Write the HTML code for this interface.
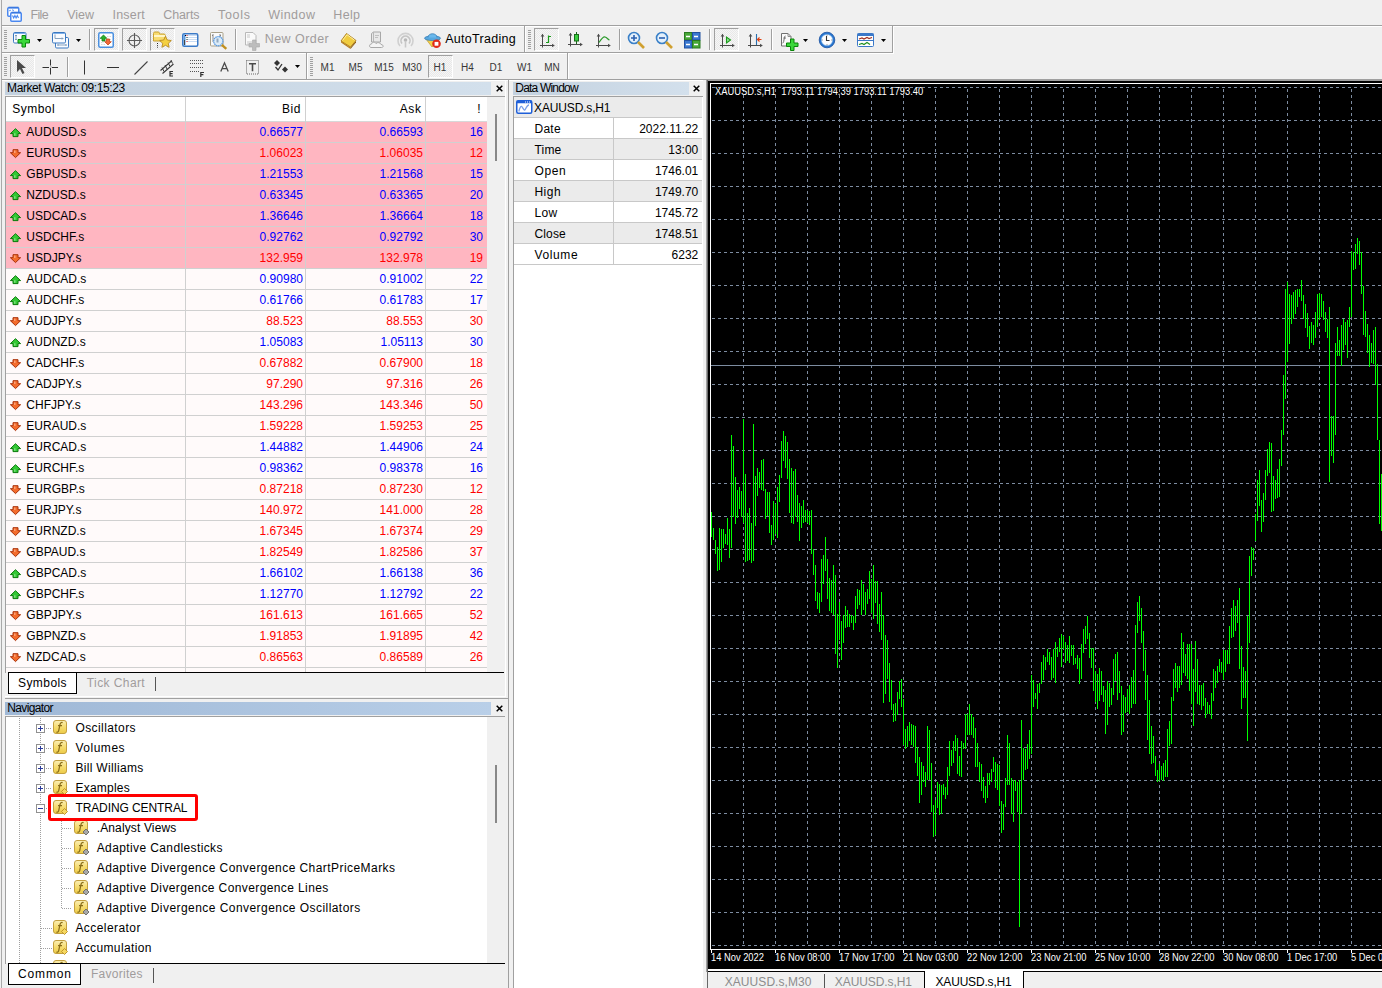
<!DOCTYPE html><html><head><meta charset="utf-8"><title>MetaTrader 4</title><style>
*{margin:0;padding:0;box-sizing:border-box}
html,body{width:1382px;height:988px;overflow:hidden;background:#f0f0f0;font-family:"Liberation Sans",sans-serif;font-size:12px;color:#000}
.ab{position:absolute}
.t{position:absolute;white-space:nowrap;line-height:14px;height:14px}
.r{text-align:right}
svg{position:absolute;overflow:visible}
</style></head><body>
<div class="ab" style="left:1px;top:0px;width:1px;height:988px;background:#a9a9a9"></div>
<div class="ab" style="left:2px;top:25px;width:1380px;height:1px;background:#a0a0a0"></div>
<div class="ab" style="left:2px;top:26px;width:1380px;height:1px;background:#fff"></div>
<div class="ab" style="left:2px;top:52px;width:891px;height:1px;background:#a0a0a0"></div>
<div class="ab" style="left:2px;top:53px;width:892px;height:1px;background:#fff"></div>
<div class="ab" style="left:892px;top:26px;width:1px;height:27px;background:#a0a0a0"></div>
<div class="ab" style="left:893px;top:26px;width:1px;height:27px;background:#fff"></div>
<div class="ab" style="left:2px;top:79px;width:1380px;height:1px;background:#a0a0a0"></div>
<div class="ab" style="left:2px;top:80px;width:1380px;height:1px;background:#fff"></div>
<div class="ab" style="left:567px;top:53px;width:1px;height:26px;background:#a0a0a0"></div>
<div class="ab" style="left:568px;top:53px;width:1px;height:26px;background:#fff"></div>
<div class="ab" style="left:524px;top:26px;width:1px;height:26px;background:#a0a0a0"></div>
<div class="ab" style="left:525px;top:26px;width:1px;height:26px;background:#fff"></div>
<div class="ab" style="left:306px;top:53px;width:1px;height:26px;background:#a0a0a0"></div>
<div class="ab" style="left:307px;top:53px;width:1px;height:26px;background:#fff"></div>
<svg style="left:6px;top:6px" width="17" height="17" viewBox="0 0 17 17"><rect x="1.75" y="1.75" width="11" height="8.5" rx="1" fill="#fff" stroke="#4a88f0" stroke-width="1.5"/><path d="M2.5 1.5h10" stroke="#3a78e0" stroke-width="1.6"/><path d="M3.5 5l1-1M6.5 3.5l1 1.5" stroke="#4a88f0" stroke-width="1.1"/><rect x="4.75" y="6.75" width="10.5" height="8.5" rx="1" fill="#fff" stroke="#4a88f0" stroke-width="1.5"/><path d="M5.5 6.5h9.5" stroke="#3a78e0" stroke-width="1.6"/><path d="M6.5 9.5l1.2 2.5 1.2-2.5 1.2 2.5 1.2-2.5 1.2 2.5" stroke="#4a88f0" stroke-width="1.1" fill="none"/></svg>
<div class="t" style="left:30.50px;top:7.67px;font-size:12.5px;letter-spacing:-0.646px;color:#a09c9c">File</div>
<div class="t" style="left:67.30px;top:7.67px;font-size:12.5px;letter-spacing:-0.067px;color:#a09c9c">View</div>
<div class="t" style="left:112.50px;top:7.67px;font-size:12.5px;letter-spacing:0.208px;color:#a09c9c">Insert</div>
<div class="t" style="left:163.30px;top:7.67px;font-size:12.5px;letter-spacing:-0.123px;color:#a09c9c">Charts</div>
<div class="t" style="left:218.00px;top:7.67px;font-size:12.5px;letter-spacing:0.706px;color:#a09c9c">Tools</div>
<div class="t" style="left:268.20px;top:7.67px;font-size:12.5px;letter-spacing:0.463px;color:#a09c9c">Window</div>
<div class="t" style="left:333.30px;top:7.67px;font-size:12.5px;letter-spacing:0.329px;color:#a09c9c">Help</div>
<div class="ab" style="left:4px;top:30px;width:3px;height:1px;background:#a0a0a0"></div>
<div class="ab" style="left:4px;top:32px;width:3px;height:1px;background:#a0a0a0"></div>
<div class="ab" style="left:4px;top:34px;width:3px;height:1px;background:#a0a0a0"></div>
<div class="ab" style="left:4px;top:36px;width:3px;height:1px;background:#a0a0a0"></div>
<div class="ab" style="left:4px;top:38px;width:3px;height:1px;background:#a0a0a0"></div>
<div class="ab" style="left:4px;top:40px;width:3px;height:1px;background:#a0a0a0"></div>
<div class="ab" style="left:4px;top:42px;width:3px;height:1px;background:#a0a0a0"></div>
<div class="ab" style="left:4px;top:44px;width:3px;height:1px;background:#a0a0a0"></div>
<div class="ab" style="left:4px;top:46px;width:3px;height:1px;background:#a0a0a0"></div>
<div class="ab" style="left:4px;top:48px;width:3px;height:1px;background:#a0a0a0"></div>
<svg style="left:13px;top:32px" width="18" height="16" viewBox="0 0 18 16"><rect x="0.5" y="0.5" width="12.5" height="10.5" rx="1.2" fill="#fafcff" stroke="#3a78c0"/><path d="M1 1.5h11.5" stroke="#7fb0e8"/><path d="M3 3v5M2 4l1-1 1 1M2 7l1 1 1-1" stroke="#7a98b8" stroke-width="0.9"/><path d="M9 3.5h3.5v4h4v3.5h-4v4h-3.5v-4h-4v-3.5h4z" fill="#3ad83a" stroke="#0a840a" stroke-width="1"/></svg>
<svg style="left:37px;top:39px" width="6" height="4" viewBox="0 0 6 4"><path d="M0 0H5L2.5 3Z" fill="#000"/></svg>
<svg style="left:52px;top:32px" width="18" height="17" viewBox="0 0 18 17"><rect x="3.5" y="5.5" width="13" height="10.5" rx="1.2" fill="#fafcff" stroke="#3a78c0"/><rect x="0.5" y="0.5" width="13" height="10.5" rx="1.2" fill="#fafcff" stroke="#3a78c0"/><path d="M1 1.5h12" stroke="#7fb0e8"/><path d="M3 2.5v4h8M10 5.5l1 1-1 1M5.5 13h9M6.5 12l-1 1 1 1M13.5 12l1 1-1 1" stroke="#7a98b8" stroke-width="0.9" fill="none"/></svg>
<svg style="left:76px;top:39px" width="6" height="4" viewBox="0 0 6 4"><path d="M0 0H5L2.5 3Z" fill="#000"/></svg>
<div class="ab" style="left:89px;top:29px;width:1px;height:21px;background:#a0a0a0"></div>
<div class="ab" style="left:90px;top:29px;width:1px;height:21px;background:#fff"></div>
<div class="ab" style="left:94px;top:28px;width:25px;height:23px;background:repeating-conic-gradient(#f6f6f6 0 25%,#e8e8e8 0 50%) 0 0/2px 2px;border-top:1px solid #a0a0a0;border-left:1px solid #a0a0a0;border-right:1px solid #fff;border-bottom:1px solid #fff"></div>
<svg style="left:98px;top:32px" width="16" height="16" viewBox="0 0 16 16"><rect x="0.75" y="0.75" width="14.5" height="14.5" rx="1.5" fill="#fff" stroke="#4a90e0" stroke-width="1.5"/><path d="M9 4.5h4M9 7.5h4M3 10.5h3M3 12.5h5" stroke="#d8d8d8" stroke-dasharray="1.5 1"/><path d="M5.5 3L8.8 6.3H7V9H4V6.3H2.2z" fill="#2cb02c" stroke="#128012" stroke-width="0.8"/><path d="M10 13L13.3 9.7H11.5V7H8.5V9.7H6.7z" fill="#f06a3a" stroke="#c84818" stroke-width="0.8"/></svg>
<div class="ab" style="left:122px;top:28px;width:25px;height:23px;background:repeating-conic-gradient(#f6f6f6 0 25%,#e8e8e8 0 50%) 0 0/2px 2px;border-top:1px solid #a0a0a0;border-left:1px solid #a0a0a0;border-right:1px solid #fff;border-bottom:1px solid #fff"></div>
<svg style="left:127px;top:32px" width="16" height="16" viewBox="0 0 16 16"><circle cx="7.5" cy="8.5" r="5.5" fill="none" stroke="#5a5a5a" stroke-width="1.1"/><path d="M7.5 1v15M0 8.5h15" stroke="#5a5a5a" stroke-width="1.1"/></svg>
<div class="ab" style="left:150px;top:28px;width:25px;height:23px;background:repeating-conic-gradient(#f6f6f6 0 25%,#e8e8e8 0 50%) 0 0/2px 2px;border-top:1px solid #a0a0a0;border-left:1px solid #a0a0a0;border-right:1px solid #fff;border-bottom:1px solid #fff"></div>
<svg style="left:152px;top:31px" width="20" height="18" viewBox="0 0 20 18"><path d="M1.5 2.5c0-1 .5-1.5 1.5-1.5h3c1 0 1.5.5 1.5 1.5v.5h4.5c.8 0 1.2.4 1.2 1.2v5.8h-11.7z" fill="#f8dc70" stroke="#c8a030"/><path d="M2 5h11" stroke="#fff6c8" stroke-width="2"/><path d="M13.5 5.2l1.8 3.8 4 .5-3 2.8.8 4-3.6-2-3.6 2 .8-4-3-2.8 4-.5z" fill="#f4d040" stroke="#b88a20" stroke-width="0.9"/><path d="M5.5 12v5" stroke="#222" stroke-dasharray="1 1.2"/></svg>
<svg style="left:182px;top:33px" width="17" height="14" viewBox="0 0 17 14"><rect x="0.75" y="0.75" width="15" height="12.5" rx="1.5" fill="#fff" stroke="#3a7ac8" stroke-width="1.5"/><rect x="1.5" y="1.5" width="2" height="11" fill="#5a9ae0"/><path d="M2.5 7v5" stroke="#444"/><path d="M5 2.5h10M5 4.5h10M5 6.5h10M5 8.5h10" stroke="#c8dcf4"/><path d="M3 2.5h1" stroke="#000"/><path d="M4.5 2.5h1M4.5 8.5h1" stroke="#e02020"/><path d="M4.5 4.5h1M4.5 6.5h1" stroke="#203a20"/></svg>
<svg style="left:210px;top:32px" width="19" height="18" viewBox="0 0 19 18"><rect x="0.5" y="0.5" width="12.5" height="13.5" rx="1" fill="#fafafa" stroke="#a8a088"/><path d="M3 2v8M10 2v4M3 3l-1 1M10 3l1 1" stroke="#707070" stroke-width="0.8"/><circle cx="8.3" cy="9.2" r="4.6" fill="#dcecf8" stroke="#5a9ae0" stroke-width="1.2" stroke-dasharray="1.5 0.5"/><path d="M7.5 6.5v4" stroke="#90a8c0" stroke-width="2"/><path d="M11.8 12.8l4.5 4" stroke="#c09020" stroke-width="2.4"/></svg>
<div class="ab" style="left:235px;top:29px;width:1px;height:21px;background:#a0a0a0"></div>
<div class="ab" style="left:236px;top:29px;width:1px;height:21px;background:#fff"></div>
<svg style="left:245px;top:31px" width="17" height="19" viewBox="0 0 17 19"><path d="M0.5 1.5h7.5l3 3v9.5h-10.5z" fill="#fafafa" stroke="#b8b8b8"/><path d="M2 4h3M2 6h3M2 11h5M2 13h4" stroke="#c8c8c8" stroke-width="1.2"/><path d="M7.5 9h3.5v3.5h3.5v3.5h-3.5v3.5h-3.5v-3.5h-3.5v-3.5h3.5z" fill="#bdbdbd" stroke="#a8a8a8" stroke-width="0.6"/></svg>
<div class="t" style="left:264.70px;top:31.67px;font-size:12.5px;letter-spacing:0.458px;color:#a09c9c">New&nbsp;Order</div>
<svg style="left:340px;top:32px" width="18" height="16" viewBox="0 0 18 16"><path d="M1 9l5.5-7.5 9.5 7-5.5 6.5z" fill="#f0cc40" stroke="#a87818" stroke-width="0.9"/><path d="M2.5 8.5l4.5-5.8 7.5 5.5" stroke="#fff0a0" fill="none"/><path d="M1 9l9.5 6.5v1.5L1 10.5z" fill="#b88020"/><path d="M10.5 15.5l5.5-6.5v1.5l-5.5 6.5z" fill="#906010"/></svg>
<svg style="left:369px;top:31px" width="17" height="18" viewBox="0 0 17 18"><path d="M2.5 2.5l2-1.5h7v10h-9z" fill="#e8e8e8" stroke="#a8a8a8"/><path d="M4.5 1v10" stroke="#b8b8b8"/><path d="M6 4.5h4M6 6.5h3" stroke="#c0c0c0"/><path d="M2 16.5c-2 0-2-3.5.5-3.5c.5-2 3.5-2.5 4.5-.5c1.5-1.5 4.5-1 5 1c2.5 0 3 3 .5 3z" fill="#f4f4f4" stroke="#a8a8a8"/></svg>
<svg style="left:397px;top:32px" width="17" height="17" viewBox="0 0 17 17"><path d="M3 14A7.5 7.5 0 1 1 14 14" fill="none" stroke="#d0d0d0" stroke-width="1.6"/><path d="M5 11.5A4.5 4.5 0 1 1 12 11.5" fill="none" stroke="#c4c4c4" stroke-width="1.6"/><circle cx="8.5" cy="8" r="1.8" fill="#b8b8b8"/><path d="M8.5 9v6.5" stroke="#c8c8c8" stroke-width="1.6"/></svg>
<svg style="left:424px;top:31px" width="18" height="18" viewBox="0 0 18 18"><path d="M2 8l6 8 8-8z" fill="#f4d048" stroke="#c8a030" stroke-width="0.8"/><ellipse cx="8.5" cy="7.2" rx="8" ry="2.3" fill="#58a8e0" stroke="#3a80b8" stroke-width="0.8"/><path d="M4 6.5c0-5 9-5 9 0" fill="#6ab8ec" stroke="#3a80b8" stroke-width="0.8"/><circle cx="12.5" cy="12.8" r="4.3" fill="#e02a1a"/><rect x="10.6" y="10.9" width="3.8" height="3.8" fill="#fff"/></svg>
<div class="t" style="left:445.20px;top:31.67px;font-size:12.5px;letter-spacing:0.296px;">AutoTrading</div>
<div class="ab" style="left:528px;top:30px;width:3px;height:1px;background:#a0a0a0"></div>
<div class="ab" style="left:528px;top:32px;width:3px;height:1px;background:#a0a0a0"></div>
<div class="ab" style="left:528px;top:34px;width:3px;height:1px;background:#a0a0a0"></div>
<div class="ab" style="left:528px;top:36px;width:3px;height:1px;background:#a0a0a0"></div>
<div class="ab" style="left:528px;top:38px;width:3px;height:1px;background:#a0a0a0"></div>
<div class="ab" style="left:528px;top:40px;width:3px;height:1px;background:#a0a0a0"></div>
<div class="ab" style="left:528px;top:42px;width:3px;height:1px;background:#a0a0a0"></div>
<div class="ab" style="left:528px;top:44px;width:3px;height:1px;background:#a0a0a0"></div>
<div class="ab" style="left:528px;top:46px;width:3px;height:1px;background:#a0a0a0"></div>
<div class="ab" style="left:528px;top:48px;width:3px;height:1px;background:#a0a0a0"></div>
<div class="ab" style="left:534px;top:28px;width:25px;height:23px;background:repeating-conic-gradient(#f6f6f6 0 25%,#e8e8e8 0 50%) 0 0/2px 2px;border-top:1px solid #a0a0a0;border-left:1px solid #a0a0a0;border-right:1px solid #fff;border-bottom:1px solid #fff"></div>
<svg style="left:539px;top:32px" width="17" height="17" viewBox="0 0 17 17"><path d="M3.5 2.5v13M1 13.5h13" stroke="#4a4a4a" stroke-width="1"/><path d="M1.7 4.5l1.8-2.8 1.8 2.8z" fill="#4a4a4a"/><path d="M13 11.7l2.8 1.8-2.8 1.8z" fill="#4a4a4a"/><path d="M9.5 3.5v7.5M7 10.5h2.5M9.5 4.5h2.5" stroke="#1a9a1a" stroke-width="1.2" fill="none"/></svg>
<svg style="left:567px;top:31px" width="17" height="17" viewBox="0 0 17 17"><path d="M3.5 2.5v13M1 13.5h13" stroke="#4a4a4a" stroke-width="1"/><path d="M1.7 4.5l1.8-2.8 1.8 2.8z" fill="#4a4a4a"/><path d="M13 11.7l2.8 1.8-2.8 1.8z" fill="#4a4a4a"/><path d="M9.5 1v12" stroke="#1a6a1a"/><rect x="7.5" y="3.5" width="4" height="6.5" fill="#3ad040" stroke="#1a6a1a"/></svg>
<svg style="left:595px;top:32px" width="17" height="17" viewBox="0 0 17 17"><path d="M3.5 2.5v13M1 13.5h13" stroke="#4a4a4a" stroke-width="1"/><path d="M1.7 4.5l1.8-2.8 1.8 2.8z" fill="#4a4a4a"/><path d="M13 11.7l2.8 1.8-2.8 1.8z" fill="#4a4a4a"/><path d="M4 10.5c2-3 4-6 6-5.5s3 2.5 4.5 3" stroke="#2a9a2a" stroke-width="1.2" fill="none"/></svg>
<div class="ab" style="left:619px;top:29px;width:1px;height:21px;background:#a0a0a0"></div>
<div class="ab" style="left:620px;top:29px;width:1px;height:21px;background:#fff"></div>
<svg style="left:627px;top:31px" width="19" height="19" viewBox="0 0 19 19"><circle cx="7" cy="7" r="5.5" fill="#e4f0fb" stroke="#3a80c8" stroke-width="1.6"/><path d="M4 7h6M7 4v6" stroke="#2a60b0" stroke-width="1.6"/><path d="M11 11l6 6" stroke="#d0a030" stroke-width="2.6"/></svg>
<svg style="left:655px;top:31px" width="19" height="19" viewBox="0 0 19 19"><circle cx="7" cy="7" r="5.5" fill="#e4f0fb" stroke="#3a80c8" stroke-width="1.6"/><path d="M4 7h6" stroke="#2a60b0" stroke-width="1.6"/><path d="M11 11l6 6" stroke="#d0a030" stroke-width="2.6"/></svg>
<svg style="left:684px;top:32px" width="17" height="17" viewBox="0 0 17 17"><rect x="0.5" y="0.5" width="7.5" height="7.5" fill="#48a838" stroke="#2a7a20"/><rect x="8.5" y="0.5" width="7.5" height="7.5" fill="#3a78d0" stroke="#2050a0"/><rect x="0.5" y="8.5" width="7.5" height="7.5" fill="#3a78d0" stroke="#2050a0"/><rect x="8.5" y="8.5" width="7.5" height="7.5" fill="#48a838" stroke="#2a7a20"/><path d="M2 4.5h4M10 4.5h4M2 12.5h4M10 12.5h4" stroke="#fff" stroke-width="1.4"/></svg>
<div class="ab" style="left:709px;top:29px;width:1px;height:21px;background:#a0a0a0"></div>
<div class="ab" style="left:710px;top:29px;width:1px;height:21px;background:#fff"></div>
<div class="ab" style="left:714px;top:28px;width:25px;height:23px;background:repeating-conic-gradient(#f6f6f6 0 25%,#e8e8e8 0 50%) 0 0/2px 2px;border-top:1px solid #a0a0a0;border-left:1px solid #a0a0a0;border-right:1px solid #fff;border-bottom:1px solid #fff"></div>
<svg style="left:719px;top:32px" width="17" height="17" viewBox="0 0 17 17"><path d="M3.5 2.5v13M1 13.5h13" stroke="#4a4a4a" stroke-width="1"/><path d="M1.7 4.5l1.8-2.8 1.8 2.8z" fill="#4a4a4a"/><path d="M13 11.7l2.8 1.8-2.8 1.8z" fill="#4a4a4a"/><path d="M7.5 5v6l4-3z" fill="#8ee08e" stroke="#1a9a1a" stroke-width="1.1"/></svg>
<svg style="left:747px;top:32px" width="17" height="17" viewBox="0 0 17 17"><path d="M3.5 2.5v13M1 13.5h13" stroke="#4a4a4a" stroke-width="1"/><path d="M1.7 4.5l1.8-2.8 1.8 2.8z" fill="#4a4a4a"/><path d="M13 11.7l2.8 1.8-2.8 1.8z" fill="#4a4a4a"/><path d="M9.5 2v11" stroke="#2a70b0" stroke-width="1.1"/><path d="M14.5 7.5h-4M12.5 5.5l-2 2 2 2" stroke="#e04010" stroke-width="1.2" fill="none"/></svg>
<div class="ab" style="left:771px;top:29px;width:1px;height:21px;background:#a0a0a0"></div>
<div class="ab" style="left:772px;top:29px;width:1px;height:21px;background:#fff"></div>
<svg style="left:781px;top:32px" width="18" height="18" viewBox="0 0 18 18"><path d="M0.5 1.5h6.5l3 3v9.5h-9.5z" fill="#fafafa" stroke="#707070"/><path d="M7 1.5v3h3" stroke="#909090" fill="none"/><path d="M4.5 4c-1 0-1 1-1.2 2l-.6 3.5c-.2 1-.5 1.5-1.2 1.5M2.5 6h2.5" stroke="#606060" stroke-width="0.9" fill="none"/><path d="M9.5 7h3.5v4h4v3.5h-4v4h-3.5v-4h-4v-3.5h4z" fill="#3ad83a" stroke="#0a840a" stroke-width="1"/></svg>
<svg style="left:803px;top:39px" width="6" height="4" viewBox="0 0 6 4"><path d="M0 0H5L2.5 3Z" fill="#000"/></svg>
<svg style="left:818px;top:31px" width="18" height="18" viewBox="0 0 18 18"><circle cx="9" cy="9" r="7.8" fill="#2a78d0" stroke="#1a50a0" stroke-width="0.8"/><circle cx="9" cy="9" r="5.6" fill="#fff" stroke="#90c0f0" stroke-width="0.6"/><path d="M8.5 5v4.5h3" stroke="#333" stroke-width="1.1" fill="none"/><path d="M9 3.8v.8M9 13.4v.8M3.8 9h.8M13.4 9h.8" stroke="#444" stroke-width="0.8"/></svg>
<svg style="left:842px;top:39px" width="6" height="4" viewBox="0 0 6 4"><path d="M0 0H5L2.5 3Z" fill="#000"/></svg>
<svg style="left:857px;top:33px" width="18" height="15" viewBox="0 0 18 15"><rect x="0.5" y="0.5" width="16" height="13" rx="1" fill="#fff" stroke="#3a78c8"/><rect x="0.5" y="0.5" width="16" height="2.5" fill="#3a78c8"/><path d="M1 7.5h16" stroke="#3a78c8"/><path d="M2 6l3-1 2 1 3-1.5 2 1 3-1" stroke="#a03020" fill="none" stroke-width="1.2"/><path d="M2 11.5l3-1 2 1 3-2 3 2" stroke="#209020" fill="none" stroke-width="1.2"/></svg>
<svg style="left:881px;top:39px" width="6" height="4" viewBox="0 0 6 4"><path d="M0 0H5L2.5 3Z" fill="#000"/></svg>
<div class="ab" style="left:4px;top:57px;width:3px;height:1px;background:#a0a0a0"></div>
<div class="ab" style="left:4px;top:59px;width:3px;height:1px;background:#a0a0a0"></div>
<div class="ab" style="left:4px;top:61px;width:3px;height:1px;background:#a0a0a0"></div>
<div class="ab" style="left:4px;top:63px;width:3px;height:1px;background:#a0a0a0"></div>
<div class="ab" style="left:4px;top:65px;width:3px;height:1px;background:#a0a0a0"></div>
<div class="ab" style="left:4px;top:67px;width:3px;height:1px;background:#a0a0a0"></div>
<div class="ab" style="left:4px;top:69px;width:3px;height:1px;background:#a0a0a0"></div>
<div class="ab" style="left:4px;top:71px;width:3px;height:1px;background:#a0a0a0"></div>
<div class="ab" style="left:4px;top:73px;width:3px;height:1px;background:#a0a0a0"></div>
<div class="ab" style="left:4px;top:75px;width:3px;height:1px;background:#a0a0a0"></div>
<div class="ab" style="left:10px;top:55px;width:25px;height:23px;background:repeating-conic-gradient(#f6f6f6 0 25%,#e8e8e8 0 50%) 0 0/2px 2px;border-top:1px solid #a0a0a0;border-left:1px solid #a0a0a0;border-right:1px solid #fff;border-bottom:1px solid #fff"></div>
<svg style="left:16px;top:59px" width="12" height="16" viewBox="0 0 12 16"><path d="M1 1v12l3-3 2.5 5 2-1-2.5-5h4z" fill="#4a4a4a"/></svg>
<svg style="left:42px;top:59px" width="17" height="17" viewBox="0 0 17 17"><path d="M8.5 0.5v6M8.5 9v6.5M0.5 8.5h6.5M10 8.5h6" stroke="#333"/><path d="M8.5 8h1" stroke="#555"/></svg>
<div class="ab" style="left:67px;top:57px;width:1px;height:20px;background:#a0a0a0"></div>
<div class="ab" style="left:68px;top:57px;width:1px;height:20px;background:#fff"></div>
<svg style="left:84px;top:60px" width="2" height="15" viewBox="0 0 2 15"><path d="M0.5 0.5v14" stroke="#333"/></svg>
<svg style="left:107px;top:66px" width="13" height="2" viewBox="0 0 13 2"><path d="M0 1.5h12" stroke="#333"/></svg>
<svg style="left:134px;top:61px" width="14" height="14" viewBox="0 0 14 14"><path d="M0.5 13.5L13.5 0.5" stroke="#444" stroke-width="1.1"/></svg>
<svg style="left:159px;top:58px" width="19" height="19" viewBox="0 0 19 19"><path d="M1.5 12.5L12.5 3M3.5 15.5L14.5 6" stroke="#3a3a3a" stroke-width="1.1"/><path d="M3 9.5l2 4M6 7l2 4M9 4.5l2 4M12 2l1.5 3.5" stroke="#3a3a3a" stroke-width="1"/><path d="M14 13.5h-3v4.5h3M11 15.7h2.6" stroke="#333" stroke-width="1.2" fill="none"/></svg>
<svg style="left:190px;top:59px" width="16" height="18" viewBox="0 0 16 18"><path d="M0 1.5h13M0 4.5h13M0 8.5h13M0 12.5h9" stroke="#555" stroke-dasharray="1 1"/><path d="M14 13.5h-3.2v4.5M10.8 15.7h2.6" stroke="#333" stroke-width="1.2" fill="none"/></svg>
<svg style="left:220px;top:62px" width="10" height="10" viewBox="0 0 10 10"><path d="M0.8 9.5L4.5 0.8 8.2 9.5M2.2 6.6h4.6" stroke="#4a4a4a" stroke-width="1.3" fill="none"/></svg>
<svg style="left:246px;top:60px" width="14" height="15" viewBox="0 0 14 15"><rect x="0.5" y="0.5" width="12" height="13.5" fill="none" stroke="#666" stroke-dasharray="1 1"/><path d="M3 3.8h7M6.5 3.8v7.5" stroke="#4a4a4a" stroke-width="1.6"/></svg>
<svg style="left:273px;top:59px" width="17" height="16" viewBox="0 0 17 16"><path d="M4 1l3 3-3 3-3-3z" fill="#333"/><path d="M12 7.5l3 3-3 3-3-3z" fill="#333"/><path d="M2.5 8l2.5 3 4-6" stroke="#333" stroke-width="1.3" fill="none"/></svg>
<svg style="left:295px;top:65px" width="6" height="4" viewBox="0 0 6 4"><path d="M0 0H5L2.5 3Z" fill="#000"/></svg>
<div class="ab" style="left:310px;top:57px;width:3px;height:1px;background:#a0a0a0"></div>
<div class="ab" style="left:310px;top:59px;width:3px;height:1px;background:#a0a0a0"></div>
<div class="ab" style="left:310px;top:61px;width:3px;height:1px;background:#a0a0a0"></div>
<div class="ab" style="left:310px;top:63px;width:3px;height:1px;background:#a0a0a0"></div>
<div class="ab" style="left:310px;top:65px;width:3px;height:1px;background:#a0a0a0"></div>
<div class="ab" style="left:310px;top:67px;width:3px;height:1px;background:#a0a0a0"></div>
<div class="ab" style="left:310px;top:69px;width:3px;height:1px;background:#a0a0a0"></div>
<div class="ab" style="left:310px;top:71px;width:3px;height:1px;background:#a0a0a0"></div>
<div class="ab" style="left:310px;top:73px;width:3px;height:1px;background:#a0a0a0"></div>
<div class="ab" style="left:310px;top:75px;width:3px;height:1px;background:#a0a0a0"></div>
<div class="t" style="left:320.55px;top:61.13px;font-size:10px;color:#383838">M1</div>
<div class="t" style="left:348.55px;top:61.13px;font-size:10px;color:#383838">M5</div>
<div class="t" style="left:374.27px;top:61.13px;font-size:10px;color:#383838">M15</div>
<div class="t" style="left:402.27px;top:61.13px;font-size:10px;color:#383838">M30</div>
<div class="ab" style="left:428px;top:55px;width:25px;height:23px;background:repeating-conic-gradient(#f6f6f6 0 25%,#e8e8e8 0 50%) 0 0/2px 2px;border-top:1px solid #a0a0a0;border-left:1px solid #a0a0a0;border-right:1px solid #fff;border-bottom:1px solid #fff"></div>
<div class="t" style="left:433.61px;top:61.13px;font-size:10px;color:#383838">H1</div>
<div class="t" style="left:461.11px;top:61.13px;font-size:10px;color:#383838">H4</div>
<div class="t" style="left:489.61px;top:61.13px;font-size:10px;color:#383838">D1</div>
<div class="t" style="left:517.00px;top:61.13px;font-size:10px;color:#383838">W1</div>
<div class="t" style="left:544.22px;top:61.13px;font-size:10px;color:#383838">MN</div>
<div class="ab" style="left:508px;top:80px;width:1px;height:908px;background:#a0a0a0"></div>
<div class="ab" style="left:5px;top:82px;width:486px;height:13px;background:linear-gradient(90deg,#c3d1df,#d3e0ec)"></div>
<div class="t" style="left:7.10px;top:80.84px;font-size:12px;letter-spacing:-0.426px;">Market&nbsp;Watch:&nbsp;09:15:23</div>
<svg style="left:495.6px;top:85px" width="7" height="7" viewBox="0 0 7 7"><path d="M0.7 0.7L6.3 6.3M6.3 0.7L0.7 6.3" stroke="#000" stroke-width="1.5"/></svg>
<div class="ab" style="left:5px;top:96px;width:500px;height:1px;background:#a0a0a0"></div>
<div class="ab" style="left:5px;top:96px;width:1px;height:577px;background:#a0a0a0"></div>
<div class="ab" style="left:6px;top:97px;width:481px;height:24px;background:#fff"></div>
<div class="ab" style="left:487px;top:97px;width:18px;height:575px;background:#f0f0f0"></div>
<div class="ab" style="left:6px;top:121px;width:481px;height:1px;background:#d8d8d8"></div>
<div class="ab" style="left:185px;top:97px;width:1px;height:575px;background:#d0d0d0"></div>
<div class="ab" style="left:305px;top:97px;width:1px;height:575px;background:#d0d0d0"></div>
<div class="ab" style="left:425px;top:97px;width:1px;height:575px;background:#d0d0d0"></div>
<div class="t" style="left:12.30px;top:101.84px;font-size:12px;letter-spacing:0.476px;">Symbol</div>
<div class="t" style="left:282.00px;top:101.84px;font-size:12px;letter-spacing:0.580px;">Bid</div>
<div class="t" style="left:399.70px;top:101.84px;font-size:12px;letter-spacing:0.636px;">Ask</div>
<div class="t" style="left:477.26px;top:101.84px;font-size:12px;">!</div>
<div class="ab" style="left:6px;top:122px;width:481px;height:20px;background:#ffb6c1"></div>
<div class="ab" style="left:185px;top:122px;width:1px;height:20px;background:#d0d0d0"></div>
<div class="ab" style="left:305px;top:122px;width:1px;height:20px;background:#d0d0d0"></div>
<div class="ab" style="left:425px;top:122px;width:1px;height:20px;background:#d0d0d0"></div>
<div class="ab" style="left:6px;top:142px;width:481px;height:1px;background:#d0d0d0"></div>
<svg style="left:10px;top:128px" width="11" height="10" viewBox="0 0 11 10"><path d="M5.5 0.7L10.6 5.6H8V8.6H3V5.6H0.4Z" fill="#34c834" stroke="#0b7a0b" stroke-width="1"/><path d="M4.2 5.2h1.2v2.6h-1.2z" fill="#8ee88e"/></svg>
<div class="t" style="left:26.30px;top:124.84px;font-size:12px;">AUDUSD.s</div>
<div class="t" style="left:259.62px;top:124.84px;font-size:12px;color:#0000ff">0.66577</div>
<div class="t" style="left:379.62px;top:124.84px;font-size:12px;color:#0000ff">0.66593</div>
<div class="t" style="left:469.65px;top:124.84px;font-size:12px;color:#0000ff">16</div>
<div class="ab" style="left:6px;top:143px;width:481px;height:20px;background:#ffb6c1"></div>
<div class="ab" style="left:185px;top:143px;width:1px;height:20px;background:#d0d0d0"></div>
<div class="ab" style="left:305px;top:143px;width:1px;height:20px;background:#d0d0d0"></div>
<div class="ab" style="left:425px;top:143px;width:1px;height:20px;background:#d0d0d0"></div>
<div class="ab" style="left:6px;top:163px;width:481px;height:1px;background:#d0d0d0"></div>
<svg style="left:10px;top:149px" width="11" height="10" viewBox="0 0 11 10"><path d="M5.5 8.6L10.6 3.7H8V0.7H3V3.7H0.4Z" fill="#f46c2c" stroke="#a83008" stroke-width="1"/><path d="M4.2 1.4h1.2v2.6h-1.2z" fill="#ffb088"/></svg>
<div class="t" style="left:26.30px;top:145.84px;font-size:12px;">EURUSD.s</div>
<div class="t" style="left:259.62px;top:145.84px;font-size:12px;color:#ff0000">1.06023</div>
<div class="t" style="left:379.62px;top:145.84px;font-size:12px;color:#ff0000">1.06035</div>
<div class="t" style="left:469.65px;top:145.84px;font-size:12px;color:#ff0000">12</div>
<div class="ab" style="left:6px;top:164px;width:481px;height:20px;background:#ffb6c1"></div>
<div class="ab" style="left:185px;top:164px;width:1px;height:20px;background:#d0d0d0"></div>
<div class="ab" style="left:305px;top:164px;width:1px;height:20px;background:#d0d0d0"></div>
<div class="ab" style="left:425px;top:164px;width:1px;height:20px;background:#d0d0d0"></div>
<div class="ab" style="left:6px;top:184px;width:481px;height:1px;background:#d0d0d0"></div>
<svg style="left:10px;top:170px" width="11" height="10" viewBox="0 0 11 10"><path d="M5.5 0.7L10.6 5.6H8V8.6H3V5.6H0.4Z" fill="#34c834" stroke="#0b7a0b" stroke-width="1"/><path d="M4.2 5.2h1.2v2.6h-1.2z" fill="#8ee88e"/></svg>
<div class="t" style="left:26.30px;top:166.84px;font-size:12px;">GBPUSD.s</div>
<div class="t" style="left:259.62px;top:166.84px;font-size:12px;color:#0000ff">1.21553</div>
<div class="t" style="left:379.62px;top:166.84px;font-size:12px;color:#0000ff">1.21568</div>
<div class="t" style="left:469.65px;top:166.84px;font-size:12px;color:#0000ff">15</div>
<div class="ab" style="left:6px;top:185px;width:481px;height:20px;background:#ffb6c1"></div>
<div class="ab" style="left:185px;top:185px;width:1px;height:20px;background:#d0d0d0"></div>
<div class="ab" style="left:305px;top:185px;width:1px;height:20px;background:#d0d0d0"></div>
<div class="ab" style="left:425px;top:185px;width:1px;height:20px;background:#d0d0d0"></div>
<div class="ab" style="left:6px;top:205px;width:481px;height:1px;background:#d0d0d0"></div>
<svg style="left:10px;top:191px" width="11" height="10" viewBox="0 0 11 10"><path d="M5.5 0.7L10.6 5.6H8V8.6H3V5.6H0.4Z" fill="#34c834" stroke="#0b7a0b" stroke-width="1"/><path d="M4.2 5.2h1.2v2.6h-1.2z" fill="#8ee88e"/></svg>
<div class="t" style="left:26.30px;top:187.84px;font-size:12px;">NZDUSD.s</div>
<div class="t" style="left:259.62px;top:187.84px;font-size:12px;color:#0000ff">0.63345</div>
<div class="t" style="left:379.62px;top:187.84px;font-size:12px;color:#0000ff">0.63365</div>
<div class="t" style="left:469.65px;top:187.84px;font-size:12px;color:#0000ff">20</div>
<div class="ab" style="left:6px;top:206px;width:481px;height:20px;background:#ffb6c1"></div>
<div class="ab" style="left:185px;top:206px;width:1px;height:20px;background:#d0d0d0"></div>
<div class="ab" style="left:305px;top:206px;width:1px;height:20px;background:#d0d0d0"></div>
<div class="ab" style="left:425px;top:206px;width:1px;height:20px;background:#d0d0d0"></div>
<div class="ab" style="left:6px;top:226px;width:481px;height:1px;background:#d0d0d0"></div>
<svg style="left:10px;top:212px" width="11" height="10" viewBox="0 0 11 10"><path d="M5.5 0.7L10.6 5.6H8V8.6H3V5.6H0.4Z" fill="#34c834" stroke="#0b7a0b" stroke-width="1"/><path d="M4.2 5.2h1.2v2.6h-1.2z" fill="#8ee88e"/></svg>
<div class="t" style="left:26.30px;top:208.84px;font-size:12px;">USDCAD.s</div>
<div class="t" style="left:259.62px;top:208.84px;font-size:12px;color:#0000ff">1.36646</div>
<div class="t" style="left:379.62px;top:208.84px;font-size:12px;color:#0000ff">1.36664</div>
<div class="t" style="left:469.65px;top:208.84px;font-size:12px;color:#0000ff">18</div>
<div class="ab" style="left:6px;top:227px;width:481px;height:20px;background:#ffb6c1"></div>
<div class="ab" style="left:185px;top:227px;width:1px;height:20px;background:#d0d0d0"></div>
<div class="ab" style="left:305px;top:227px;width:1px;height:20px;background:#d0d0d0"></div>
<div class="ab" style="left:425px;top:227px;width:1px;height:20px;background:#d0d0d0"></div>
<div class="ab" style="left:6px;top:247px;width:481px;height:1px;background:#d0d0d0"></div>
<svg style="left:10px;top:233px" width="11" height="10" viewBox="0 0 11 10"><path d="M5.5 0.7L10.6 5.6H8V8.6H3V5.6H0.4Z" fill="#34c834" stroke="#0b7a0b" stroke-width="1"/><path d="M4.2 5.2h1.2v2.6h-1.2z" fill="#8ee88e"/></svg>
<div class="t" style="left:26.30px;top:229.84px;font-size:12px;">USDCHF.s</div>
<div class="t" style="left:259.62px;top:229.84px;font-size:12px;color:#0000ff">0.92762</div>
<div class="t" style="left:379.62px;top:229.84px;font-size:12px;color:#0000ff">0.92792</div>
<div class="t" style="left:469.65px;top:229.84px;font-size:12px;color:#0000ff">30</div>
<div class="ab" style="left:6px;top:248px;width:481px;height:20px;background:#ffb6c1"></div>
<div class="ab" style="left:185px;top:248px;width:1px;height:20px;background:#d0d0d0"></div>
<div class="ab" style="left:305px;top:248px;width:1px;height:20px;background:#d0d0d0"></div>
<div class="ab" style="left:425px;top:248px;width:1px;height:20px;background:#d0d0d0"></div>
<div class="ab" style="left:6px;top:268px;width:481px;height:1px;background:#d0d0d0"></div>
<svg style="left:10px;top:254px" width="11" height="10" viewBox="0 0 11 10"><path d="M5.5 8.6L10.6 3.7H8V0.7H3V3.7H0.4Z" fill="#f46c2c" stroke="#a83008" stroke-width="1"/><path d="M4.2 1.4h1.2v2.6h-1.2z" fill="#ffb088"/></svg>
<div class="t" style="left:26.30px;top:250.84px;font-size:12px;">USDJPY.s</div>
<div class="t" style="left:259.62px;top:250.84px;font-size:12px;color:#ff0000">132.959</div>
<div class="t" style="left:379.62px;top:250.84px;font-size:12px;color:#ff0000">132.978</div>
<div class="t" style="left:469.65px;top:250.84px;font-size:12px;color:#ff0000">19</div>
<div class="ab" style="left:6px;top:269px;width:481px;height:20px;background:#fffafa"></div>
<div class="ab" style="left:185px;top:269px;width:1px;height:20px;background:#d0d0d0"></div>
<div class="ab" style="left:305px;top:269px;width:1px;height:20px;background:#d0d0d0"></div>
<div class="ab" style="left:425px;top:269px;width:1px;height:20px;background:#d0d0d0"></div>
<div class="ab" style="left:6px;top:289px;width:481px;height:1px;background:#d0d0d0"></div>
<svg style="left:10px;top:275px" width="11" height="10" viewBox="0 0 11 10"><path d="M5.5 0.7L10.6 5.6H8V8.6H3V5.6H0.4Z" fill="#34c834" stroke="#0b7a0b" stroke-width="1"/><path d="M4.2 5.2h1.2v2.6h-1.2z" fill="#8ee88e"/></svg>
<div class="t" style="left:26.30px;top:271.84px;font-size:12px;">AUDCAD.s</div>
<div class="t" style="left:259.62px;top:271.84px;font-size:12px;color:#0000ff">0.90980</div>
<div class="t" style="left:379.62px;top:271.84px;font-size:12px;color:#0000ff">0.91002</div>
<div class="t" style="left:469.65px;top:271.84px;font-size:12px;color:#0000ff">22</div>
<div class="ab" style="left:6px;top:290px;width:481px;height:20px;background:#fffafa"></div>
<div class="ab" style="left:185px;top:290px;width:1px;height:20px;background:#d0d0d0"></div>
<div class="ab" style="left:305px;top:290px;width:1px;height:20px;background:#d0d0d0"></div>
<div class="ab" style="left:425px;top:290px;width:1px;height:20px;background:#d0d0d0"></div>
<div class="ab" style="left:6px;top:310px;width:481px;height:1px;background:#d0d0d0"></div>
<svg style="left:10px;top:296px" width="11" height="10" viewBox="0 0 11 10"><path d="M5.5 0.7L10.6 5.6H8V8.6H3V5.6H0.4Z" fill="#34c834" stroke="#0b7a0b" stroke-width="1"/><path d="M4.2 5.2h1.2v2.6h-1.2z" fill="#8ee88e"/></svg>
<div class="t" style="left:26.30px;top:292.84px;font-size:12px;">AUDCHF.s</div>
<div class="t" style="left:259.62px;top:292.84px;font-size:12px;color:#0000ff">0.61766</div>
<div class="t" style="left:379.62px;top:292.84px;font-size:12px;color:#0000ff">0.61783</div>
<div class="t" style="left:469.65px;top:292.84px;font-size:12px;color:#0000ff">17</div>
<div class="ab" style="left:6px;top:311px;width:481px;height:20px;background:#fffafa"></div>
<div class="ab" style="left:185px;top:311px;width:1px;height:20px;background:#d0d0d0"></div>
<div class="ab" style="left:305px;top:311px;width:1px;height:20px;background:#d0d0d0"></div>
<div class="ab" style="left:425px;top:311px;width:1px;height:20px;background:#d0d0d0"></div>
<div class="ab" style="left:6px;top:331px;width:481px;height:1px;background:#d0d0d0"></div>
<svg style="left:10px;top:317px" width="11" height="10" viewBox="0 0 11 10"><path d="M5.5 8.6L10.6 3.7H8V0.7H3V3.7H0.4Z" fill="#f46c2c" stroke="#a83008" stroke-width="1"/><path d="M4.2 1.4h1.2v2.6h-1.2z" fill="#ffb088"/></svg>
<div class="t" style="left:26.30px;top:313.84px;font-size:12px;">AUDJPY.s</div>
<div class="t" style="left:266.30px;top:313.84px;font-size:12px;color:#ff0000">88.523</div>
<div class="t" style="left:386.30px;top:313.84px;font-size:12px;color:#ff0000">88.553</div>
<div class="t" style="left:469.65px;top:313.84px;font-size:12px;color:#ff0000">30</div>
<div class="ab" style="left:6px;top:332px;width:481px;height:20px;background:#fffafa"></div>
<div class="ab" style="left:185px;top:332px;width:1px;height:20px;background:#d0d0d0"></div>
<div class="ab" style="left:305px;top:332px;width:1px;height:20px;background:#d0d0d0"></div>
<div class="ab" style="left:425px;top:332px;width:1px;height:20px;background:#d0d0d0"></div>
<div class="ab" style="left:6px;top:352px;width:481px;height:1px;background:#d0d0d0"></div>
<svg style="left:10px;top:338px" width="11" height="10" viewBox="0 0 11 10"><path d="M5.5 0.7L10.6 5.6H8V8.6H3V5.6H0.4Z" fill="#34c834" stroke="#0b7a0b" stroke-width="1"/><path d="M4.2 5.2h1.2v2.6h-1.2z" fill="#8ee88e"/></svg>
<div class="t" style="left:26.30px;top:334.84px;font-size:12px;">AUDNZD.s</div>
<div class="t" style="left:259.62px;top:334.84px;font-size:12px;color:#0000ff">1.05083</div>
<div class="t" style="left:380.51px;top:334.84px;font-size:12px;color:#0000ff">1.05113</div>
<div class="t" style="left:469.65px;top:334.84px;font-size:12px;color:#0000ff">30</div>
<div class="ab" style="left:6px;top:353px;width:481px;height:20px;background:#fffafa"></div>
<div class="ab" style="left:185px;top:353px;width:1px;height:20px;background:#d0d0d0"></div>
<div class="ab" style="left:305px;top:353px;width:1px;height:20px;background:#d0d0d0"></div>
<div class="ab" style="left:425px;top:353px;width:1px;height:20px;background:#d0d0d0"></div>
<div class="ab" style="left:6px;top:373px;width:481px;height:1px;background:#d0d0d0"></div>
<svg style="left:10px;top:359px" width="11" height="10" viewBox="0 0 11 10"><path d="M5.5 8.6L10.6 3.7H8V0.7H3V3.7H0.4Z" fill="#f46c2c" stroke="#a83008" stroke-width="1"/><path d="M4.2 1.4h1.2v2.6h-1.2z" fill="#ffb088"/></svg>
<div class="t" style="left:26.30px;top:355.84px;font-size:12px;">CADCHF.s</div>
<div class="t" style="left:259.62px;top:355.84px;font-size:12px;color:#ff0000">0.67882</div>
<div class="t" style="left:379.62px;top:355.84px;font-size:12px;color:#ff0000">0.67900</div>
<div class="t" style="left:469.65px;top:355.84px;font-size:12px;color:#ff0000">18</div>
<div class="ab" style="left:6px;top:374px;width:481px;height:20px;background:#fffafa"></div>
<div class="ab" style="left:185px;top:374px;width:1px;height:20px;background:#d0d0d0"></div>
<div class="ab" style="left:305px;top:374px;width:1px;height:20px;background:#d0d0d0"></div>
<div class="ab" style="left:425px;top:374px;width:1px;height:20px;background:#d0d0d0"></div>
<div class="ab" style="left:6px;top:394px;width:481px;height:1px;background:#d0d0d0"></div>
<svg style="left:10px;top:380px" width="11" height="10" viewBox="0 0 11 10"><path d="M5.5 8.6L10.6 3.7H8V0.7H3V3.7H0.4Z" fill="#f46c2c" stroke="#a83008" stroke-width="1"/><path d="M4.2 1.4h1.2v2.6h-1.2z" fill="#ffb088"/></svg>
<div class="t" style="left:26.30px;top:376.84px;font-size:12px;">CADJPY.s</div>
<div class="t" style="left:266.30px;top:376.84px;font-size:12px;color:#ff0000">97.290</div>
<div class="t" style="left:386.30px;top:376.84px;font-size:12px;color:#ff0000">97.316</div>
<div class="t" style="left:469.65px;top:376.84px;font-size:12px;color:#ff0000">26</div>
<div class="ab" style="left:6px;top:395px;width:481px;height:20px;background:#fffafa"></div>
<div class="ab" style="left:185px;top:395px;width:1px;height:20px;background:#d0d0d0"></div>
<div class="ab" style="left:305px;top:395px;width:1px;height:20px;background:#d0d0d0"></div>
<div class="ab" style="left:425px;top:395px;width:1px;height:20px;background:#d0d0d0"></div>
<div class="ab" style="left:6px;top:415px;width:481px;height:1px;background:#d0d0d0"></div>
<svg style="left:10px;top:401px" width="11" height="10" viewBox="0 0 11 10"><path d="M5.5 8.6L10.6 3.7H8V0.7H3V3.7H0.4Z" fill="#f46c2c" stroke="#a83008" stroke-width="1"/><path d="M4.2 1.4h1.2v2.6h-1.2z" fill="#ffb088"/></svg>
<div class="t" style="left:26.30px;top:397.84px;font-size:12px;">CHFJPY.s</div>
<div class="t" style="left:259.62px;top:397.84px;font-size:12px;color:#ff0000">143.296</div>
<div class="t" style="left:379.62px;top:397.84px;font-size:12px;color:#ff0000">143.346</div>
<div class="t" style="left:469.65px;top:397.84px;font-size:12px;color:#ff0000">50</div>
<div class="ab" style="left:6px;top:416px;width:481px;height:20px;background:#fffafa"></div>
<div class="ab" style="left:185px;top:416px;width:1px;height:20px;background:#d0d0d0"></div>
<div class="ab" style="left:305px;top:416px;width:1px;height:20px;background:#d0d0d0"></div>
<div class="ab" style="left:425px;top:416px;width:1px;height:20px;background:#d0d0d0"></div>
<div class="ab" style="left:6px;top:436px;width:481px;height:1px;background:#d0d0d0"></div>
<svg style="left:10px;top:422px" width="11" height="10" viewBox="0 0 11 10"><path d="M5.5 8.6L10.6 3.7H8V0.7H3V3.7H0.4Z" fill="#f46c2c" stroke="#a83008" stroke-width="1"/><path d="M4.2 1.4h1.2v2.6h-1.2z" fill="#ffb088"/></svg>
<div class="t" style="left:26.30px;top:418.84px;font-size:12px;">EURAUD.s</div>
<div class="t" style="left:259.62px;top:418.84px;font-size:12px;color:#ff0000">1.59228</div>
<div class="t" style="left:379.62px;top:418.84px;font-size:12px;color:#ff0000">1.59253</div>
<div class="t" style="left:469.65px;top:418.84px;font-size:12px;color:#ff0000">25</div>
<div class="ab" style="left:6px;top:437px;width:481px;height:20px;background:#fffafa"></div>
<div class="ab" style="left:185px;top:437px;width:1px;height:20px;background:#d0d0d0"></div>
<div class="ab" style="left:305px;top:437px;width:1px;height:20px;background:#d0d0d0"></div>
<div class="ab" style="left:425px;top:437px;width:1px;height:20px;background:#d0d0d0"></div>
<div class="ab" style="left:6px;top:457px;width:481px;height:1px;background:#d0d0d0"></div>
<svg style="left:10px;top:443px" width="11" height="10" viewBox="0 0 11 10"><path d="M5.5 0.7L10.6 5.6H8V8.6H3V5.6H0.4Z" fill="#34c834" stroke="#0b7a0b" stroke-width="1"/><path d="M4.2 5.2h1.2v2.6h-1.2z" fill="#8ee88e"/></svg>
<div class="t" style="left:26.30px;top:439.84px;font-size:12px;">EURCAD.s</div>
<div class="t" style="left:259.62px;top:439.84px;font-size:12px;color:#0000ff">1.44882</div>
<div class="t" style="left:379.62px;top:439.84px;font-size:12px;color:#0000ff">1.44906</div>
<div class="t" style="left:469.65px;top:439.84px;font-size:12px;color:#0000ff">24</div>
<div class="ab" style="left:6px;top:458px;width:481px;height:20px;background:#fffafa"></div>
<div class="ab" style="left:185px;top:458px;width:1px;height:20px;background:#d0d0d0"></div>
<div class="ab" style="left:305px;top:458px;width:1px;height:20px;background:#d0d0d0"></div>
<div class="ab" style="left:425px;top:458px;width:1px;height:20px;background:#d0d0d0"></div>
<div class="ab" style="left:6px;top:478px;width:481px;height:1px;background:#d0d0d0"></div>
<svg style="left:10px;top:464px" width="11" height="10" viewBox="0 0 11 10"><path d="M5.5 0.7L10.6 5.6H8V8.6H3V5.6H0.4Z" fill="#34c834" stroke="#0b7a0b" stroke-width="1"/><path d="M4.2 5.2h1.2v2.6h-1.2z" fill="#8ee88e"/></svg>
<div class="t" style="left:26.30px;top:460.84px;font-size:12px;">EURCHF.s</div>
<div class="t" style="left:259.62px;top:460.84px;font-size:12px;color:#0000ff">0.98362</div>
<div class="t" style="left:379.62px;top:460.84px;font-size:12px;color:#0000ff">0.98378</div>
<div class="t" style="left:469.65px;top:460.84px;font-size:12px;color:#0000ff">16</div>
<div class="ab" style="left:6px;top:479px;width:481px;height:20px;background:#fffafa"></div>
<div class="ab" style="left:185px;top:479px;width:1px;height:20px;background:#d0d0d0"></div>
<div class="ab" style="left:305px;top:479px;width:1px;height:20px;background:#d0d0d0"></div>
<div class="ab" style="left:425px;top:479px;width:1px;height:20px;background:#d0d0d0"></div>
<div class="ab" style="left:6px;top:499px;width:481px;height:1px;background:#d0d0d0"></div>
<svg style="left:10px;top:485px" width="11" height="10" viewBox="0 0 11 10"><path d="M5.5 8.6L10.6 3.7H8V0.7H3V3.7H0.4Z" fill="#f46c2c" stroke="#a83008" stroke-width="1"/><path d="M4.2 1.4h1.2v2.6h-1.2z" fill="#ffb088"/></svg>
<div class="t" style="left:26.30px;top:481.84px;font-size:12px;">EURGBP.s</div>
<div class="t" style="left:259.62px;top:481.84px;font-size:12px;color:#ff0000">0.87218</div>
<div class="t" style="left:379.62px;top:481.84px;font-size:12px;color:#ff0000">0.87230</div>
<div class="t" style="left:469.65px;top:481.84px;font-size:12px;color:#ff0000">12</div>
<div class="ab" style="left:6px;top:500px;width:481px;height:20px;background:#fffafa"></div>
<div class="ab" style="left:185px;top:500px;width:1px;height:20px;background:#d0d0d0"></div>
<div class="ab" style="left:305px;top:500px;width:1px;height:20px;background:#d0d0d0"></div>
<div class="ab" style="left:425px;top:500px;width:1px;height:20px;background:#d0d0d0"></div>
<div class="ab" style="left:6px;top:520px;width:481px;height:1px;background:#d0d0d0"></div>
<svg style="left:10px;top:506px" width="11" height="10" viewBox="0 0 11 10"><path d="M5.5 8.6L10.6 3.7H8V0.7H3V3.7H0.4Z" fill="#f46c2c" stroke="#a83008" stroke-width="1"/><path d="M4.2 1.4h1.2v2.6h-1.2z" fill="#ffb088"/></svg>
<div class="t" style="left:26.30px;top:502.84px;font-size:12px;">EURJPY.s</div>
<div class="t" style="left:259.62px;top:502.84px;font-size:12px;color:#ff0000">140.972</div>
<div class="t" style="left:379.62px;top:502.84px;font-size:12px;color:#ff0000">141.000</div>
<div class="t" style="left:469.65px;top:502.84px;font-size:12px;color:#ff0000">28</div>
<div class="ab" style="left:6px;top:521px;width:481px;height:20px;background:#fffafa"></div>
<div class="ab" style="left:185px;top:521px;width:1px;height:20px;background:#d0d0d0"></div>
<div class="ab" style="left:305px;top:521px;width:1px;height:20px;background:#d0d0d0"></div>
<div class="ab" style="left:425px;top:521px;width:1px;height:20px;background:#d0d0d0"></div>
<div class="ab" style="left:6px;top:541px;width:481px;height:1px;background:#d0d0d0"></div>
<svg style="left:10px;top:527px" width="11" height="10" viewBox="0 0 11 10"><path d="M5.5 8.6L10.6 3.7H8V0.7H3V3.7H0.4Z" fill="#f46c2c" stroke="#a83008" stroke-width="1"/><path d="M4.2 1.4h1.2v2.6h-1.2z" fill="#ffb088"/></svg>
<div class="t" style="left:26.30px;top:523.84px;font-size:12px;">EURNZD.s</div>
<div class="t" style="left:259.62px;top:523.84px;font-size:12px;color:#ff0000">1.67345</div>
<div class="t" style="left:379.62px;top:523.84px;font-size:12px;color:#ff0000">1.67374</div>
<div class="t" style="left:469.65px;top:523.84px;font-size:12px;color:#ff0000">29</div>
<div class="ab" style="left:6px;top:542px;width:481px;height:20px;background:#fffafa"></div>
<div class="ab" style="left:185px;top:542px;width:1px;height:20px;background:#d0d0d0"></div>
<div class="ab" style="left:305px;top:542px;width:1px;height:20px;background:#d0d0d0"></div>
<div class="ab" style="left:425px;top:542px;width:1px;height:20px;background:#d0d0d0"></div>
<div class="ab" style="left:6px;top:562px;width:481px;height:1px;background:#d0d0d0"></div>
<svg style="left:10px;top:548px" width="11" height="10" viewBox="0 0 11 10"><path d="M5.5 8.6L10.6 3.7H8V0.7H3V3.7H0.4Z" fill="#f46c2c" stroke="#a83008" stroke-width="1"/><path d="M4.2 1.4h1.2v2.6h-1.2z" fill="#ffb088"/></svg>
<div class="t" style="left:26.30px;top:544.84px;font-size:12px;">GBPAUD.s</div>
<div class="t" style="left:259.62px;top:544.84px;font-size:12px;color:#ff0000">1.82549</div>
<div class="t" style="left:379.62px;top:544.84px;font-size:12px;color:#ff0000">1.82586</div>
<div class="t" style="left:469.65px;top:544.84px;font-size:12px;color:#ff0000">37</div>
<div class="ab" style="left:6px;top:563px;width:481px;height:20px;background:#fffafa"></div>
<div class="ab" style="left:185px;top:563px;width:1px;height:20px;background:#d0d0d0"></div>
<div class="ab" style="left:305px;top:563px;width:1px;height:20px;background:#d0d0d0"></div>
<div class="ab" style="left:425px;top:563px;width:1px;height:20px;background:#d0d0d0"></div>
<div class="ab" style="left:6px;top:583px;width:481px;height:1px;background:#d0d0d0"></div>
<svg style="left:10px;top:569px" width="11" height="10" viewBox="0 0 11 10"><path d="M5.5 0.7L10.6 5.6H8V8.6H3V5.6H0.4Z" fill="#34c834" stroke="#0b7a0b" stroke-width="1"/><path d="M4.2 5.2h1.2v2.6h-1.2z" fill="#8ee88e"/></svg>
<div class="t" style="left:26.30px;top:565.84px;font-size:12px;">GBPCAD.s</div>
<div class="t" style="left:259.62px;top:565.84px;font-size:12px;color:#0000ff">1.66102</div>
<div class="t" style="left:379.62px;top:565.84px;font-size:12px;color:#0000ff">1.66138</div>
<div class="t" style="left:469.65px;top:565.84px;font-size:12px;color:#0000ff">36</div>
<div class="ab" style="left:6px;top:584px;width:481px;height:20px;background:#fffafa"></div>
<div class="ab" style="left:185px;top:584px;width:1px;height:20px;background:#d0d0d0"></div>
<div class="ab" style="left:305px;top:584px;width:1px;height:20px;background:#d0d0d0"></div>
<div class="ab" style="left:425px;top:584px;width:1px;height:20px;background:#d0d0d0"></div>
<div class="ab" style="left:6px;top:604px;width:481px;height:1px;background:#d0d0d0"></div>
<svg style="left:10px;top:590px" width="11" height="10" viewBox="0 0 11 10"><path d="M5.5 0.7L10.6 5.6H8V8.6H3V5.6H0.4Z" fill="#34c834" stroke="#0b7a0b" stroke-width="1"/><path d="M4.2 5.2h1.2v2.6h-1.2z" fill="#8ee88e"/></svg>
<div class="t" style="left:26.30px;top:586.84px;font-size:12px;">GBPCHF.s</div>
<div class="t" style="left:259.62px;top:586.84px;font-size:12px;color:#0000ff">1.12770</div>
<div class="t" style="left:379.62px;top:586.84px;font-size:12px;color:#0000ff">1.12792</div>
<div class="t" style="left:469.65px;top:586.84px;font-size:12px;color:#0000ff">22</div>
<div class="ab" style="left:6px;top:605px;width:481px;height:20px;background:#fffafa"></div>
<div class="ab" style="left:185px;top:605px;width:1px;height:20px;background:#d0d0d0"></div>
<div class="ab" style="left:305px;top:605px;width:1px;height:20px;background:#d0d0d0"></div>
<div class="ab" style="left:425px;top:605px;width:1px;height:20px;background:#d0d0d0"></div>
<div class="ab" style="left:6px;top:625px;width:481px;height:1px;background:#d0d0d0"></div>
<svg style="left:10px;top:611px" width="11" height="10" viewBox="0 0 11 10"><path d="M5.5 8.6L10.6 3.7H8V0.7H3V3.7H0.4Z" fill="#f46c2c" stroke="#a83008" stroke-width="1"/><path d="M4.2 1.4h1.2v2.6h-1.2z" fill="#ffb088"/></svg>
<div class="t" style="left:26.30px;top:607.84px;font-size:12px;">GBPJPY.s</div>
<div class="t" style="left:259.62px;top:607.84px;font-size:12px;color:#ff0000">161.613</div>
<div class="t" style="left:379.62px;top:607.84px;font-size:12px;color:#ff0000">161.665</div>
<div class="t" style="left:469.65px;top:607.84px;font-size:12px;color:#ff0000">52</div>
<div class="ab" style="left:6px;top:626px;width:481px;height:20px;background:#fffafa"></div>
<div class="ab" style="left:185px;top:626px;width:1px;height:20px;background:#d0d0d0"></div>
<div class="ab" style="left:305px;top:626px;width:1px;height:20px;background:#d0d0d0"></div>
<div class="ab" style="left:425px;top:626px;width:1px;height:20px;background:#d0d0d0"></div>
<div class="ab" style="left:6px;top:646px;width:481px;height:1px;background:#d0d0d0"></div>
<svg style="left:10px;top:632px" width="11" height="10" viewBox="0 0 11 10"><path d="M5.5 8.6L10.6 3.7H8V0.7H3V3.7H0.4Z" fill="#f46c2c" stroke="#a83008" stroke-width="1"/><path d="M4.2 1.4h1.2v2.6h-1.2z" fill="#ffb088"/></svg>
<div class="t" style="left:26.30px;top:628.84px;font-size:12px;">GBPNZD.s</div>
<div class="t" style="left:259.62px;top:628.84px;font-size:12px;color:#ff0000">1.91853</div>
<div class="t" style="left:379.62px;top:628.84px;font-size:12px;color:#ff0000">1.91895</div>
<div class="t" style="left:469.65px;top:628.84px;font-size:12px;color:#ff0000">42</div>
<div class="ab" style="left:6px;top:647px;width:481px;height:20px;background:#fffafa"></div>
<div class="ab" style="left:185px;top:647px;width:1px;height:20px;background:#d0d0d0"></div>
<div class="ab" style="left:305px;top:647px;width:1px;height:20px;background:#d0d0d0"></div>
<div class="ab" style="left:425px;top:647px;width:1px;height:20px;background:#d0d0d0"></div>
<div class="ab" style="left:6px;top:667px;width:481px;height:1px;background:#d0d0d0"></div>
<svg style="left:10px;top:653px" width="11" height="10" viewBox="0 0 11 10"><path d="M5.5 8.6L10.6 3.7H8V0.7H3V3.7H0.4Z" fill="#f46c2c" stroke="#a83008" stroke-width="1"/><path d="M4.2 1.4h1.2v2.6h-1.2z" fill="#ffb088"/></svg>
<div class="t" style="left:26.30px;top:649.84px;font-size:12px;">NZDCAD.s</div>
<div class="t" style="left:259.62px;top:649.84px;font-size:12px;color:#ff0000">0.86563</div>
<div class="t" style="left:379.62px;top:649.84px;font-size:12px;color:#ff0000">0.86589</div>
<div class="t" style="left:469.65px;top:649.84px;font-size:12px;color:#ff0000">26</div>
<div class="ab" style="left:6px;top:668px;width:481px;height:4px;background:#fffafa"></div>
<div class="ab" style="left:185px;top:668px;width:1px;height:4px;background:#d0d0d0"></div>
<div class="ab" style="left:305px;top:668px;width:1px;height:4px;background:#d0d0d0"></div>
<div class="ab" style="left:425px;top:668px;width:1px;height:4px;background:#d0d0d0"></div>
<div class="ab" style="left:495px;top:114px;width:2px;height:47px;background:#888"></div>
<div class="ab" style="left:8px;top:672px;width:496px;height:1px;background:#000"></div>
<div class="ab" style="left:8px;top:673px;width:69px;height:21px;background:#fff"></div>
<div class="ab" style="left:8px;top:673px;width:1px;height:21px;background:#000"></div>
<div class="ab" style="left:76px;top:672px;width:1px;height:22px;background:#000"></div>
<div class="ab" style="left:8px;top:693px;width:69px;height:1px;background:#000"></div>
<div class="t" style="left:18.00px;top:675.84px;font-size:12px;letter-spacing:0.430px;">Symbols</div>
<div class="t" style="left:86.80px;top:675.84px;font-size:12px;letter-spacing:0.408px;color:#a09c9c">Tick&nbsp;Chart</div>
<div class="ab" style="left:155px;top:677px;width:1px;height:14px;background:#555"></div>
<div class="ab" style="left:5px;top:696px;width:501px;height:1px;background:#fff"></div>
<div class="ab" style="left:505px;top:80px;width:1px;height:617px;background:#fff"></div>
<div class="ab" style="left:5px;top:698px;width:503px;height:1px;background:#a0a0a0"></div>
<div class="ab" style="left:5px;top:702px;width:486px;height:13px;background:linear-gradient(90deg,#9fb8d6,#b9cfe8)"></div>
<div class="t" style="left:7.20px;top:700.84px;font-size:12px;letter-spacing:-0.633px;">Navigator</div>
<svg style="left:495.6px;top:705.3px" width="7" height="7" viewBox="0 0 7 7"><path d="M0.7 0.7L6.3 6.3M6.3 0.7L0.7 6.3" stroke="#000" stroke-width="1.5"/></svg>
<div class="ab" style="left:5px;top:716px;width:500px;height:1px;background:#a0a0a0"></div>
<div class="ab" style="left:5px;top:716px;width:1px;height:248px;background:#a0a0a0"></div>
<div class="ab" style="left:6px;top:717px;width:481px;height:246px;background:#fff"></div>
<div class="ab" style="left:487px;top:717px;width:18px;height:246px;background:#f0f0f0"></div>
<div class="ab" style="left:495px;top:765px;width:2px;height:58px;background:#888"></div>
<svg width="0" height="0" style="position:absolute"><defs><linearGradient id="fg" x1="0" y1="0" x2="0" y2="1"><stop offset="0" stop-color="#fbf0b8"/><stop offset="0.5" stop-color="#f6dc70"/><stop offset="1" stop-color="#eccb48"/></linearGradient></defs></svg>
<div class="ab" style="left:19px;top:718px;width:1px;height:245px;background:repeating-linear-gradient(180deg,#a0a0a0 0 1px,transparent 1px 2px)"></div>
<div class="ab" style="left:40px;top:718px;width:1px;height:245px;background:repeating-linear-gradient(180deg,#a0a0a0 0 1px,transparent 1px 2px)"></div>
<svg style="left:36px;top:724px" width="9" height="9" viewBox="0 0 9 9"><rect x="0.5" y="0.5" width="8" height="8" fill="#fff" stroke="#909090"/><path d="M2 4.5h5" stroke="#2a3a9a"/><path d="M4.5 2v5" stroke="#2a3a9a"/></svg>
<div class="ab" style="left:46px;top:728px;width:6px;height:1px;background:repeating-linear-gradient(90deg,#a0a0a0 0 1px,transparent 1px 2px)"></div>
<svg style="left:53px;top:720px" width="14" height="14" viewBox="0 0 14 14"><rect x="0.5" y="0.5" width="13" height="13" rx="2.5" fill="url(#fg)" stroke="#c4a040"/><path d="M9.6 2.6c-1.2-.5-2.2.2-2.5 1.6l-1.4 6.4c-.3 1.4-1.2 1.9-2.3 1.5M5 5.6h4" stroke="#8a6e1a" stroke-width="1.25" fill="none"/></svg>
<div class="t" style="left:75.40px;top:720.84px;font-size:12px;letter-spacing:0.418px;">Oscillators</div>
<svg style="left:36px;top:744px" width="9" height="9" viewBox="0 0 9 9"><rect x="0.5" y="0.5" width="8" height="8" fill="#fff" stroke="#909090"/><path d="M2 4.5h5" stroke="#2a3a9a"/><path d="M4.5 2v5" stroke="#2a3a9a"/></svg>
<div class="ab" style="left:46px;top:748px;width:6px;height:1px;background:repeating-linear-gradient(90deg,#a0a0a0 0 1px,transparent 1px 2px)"></div>
<svg style="left:53px;top:740px" width="14" height="14" viewBox="0 0 14 14"><rect x="0.5" y="0.5" width="13" height="13" rx="2.5" fill="url(#fg)" stroke="#c4a040"/><path d="M9.6 2.6c-1.2-.5-2.2.2-2.5 1.6l-1.4 6.4c-.3 1.4-1.2 1.9-2.3 1.5M5 5.6h4" stroke="#8a6e1a" stroke-width="1.25" fill="none"/></svg>
<div class="t" style="left:75.40px;top:740.84px;font-size:12px;letter-spacing:0.530px;">Volumes</div>
<svg style="left:36px;top:764px" width="9" height="9" viewBox="0 0 9 9"><rect x="0.5" y="0.5" width="8" height="8" fill="#fff" stroke="#909090"/><path d="M2 4.5h5" stroke="#2a3a9a"/><path d="M4.5 2v5" stroke="#2a3a9a"/></svg>
<div class="ab" style="left:46px;top:768px;width:6px;height:1px;background:repeating-linear-gradient(90deg,#a0a0a0 0 1px,transparent 1px 2px)"></div>
<svg style="left:53px;top:760px" width="14" height="14" viewBox="0 0 14 14"><rect x="0.5" y="0.5" width="13" height="13" rx="2.5" fill="url(#fg)" stroke="#c4a040"/><path d="M9.6 2.6c-1.2-.5-2.2.2-2.5 1.6l-1.4 6.4c-.3 1.4-1.2 1.9-2.3 1.5M5 5.6h4" stroke="#8a6e1a" stroke-width="1.25" fill="none"/></svg>
<div class="t" style="left:75.40px;top:760.84px;font-size:12px;letter-spacing:0.325px;">Bill&nbsp;Williams</div>
<svg style="left:36px;top:784px" width="9" height="9" viewBox="0 0 9 9"><rect x="0.5" y="0.5" width="8" height="8" fill="#fff" stroke="#909090"/><path d="M2 4.5h5" stroke="#2a3a9a"/><path d="M4.5 2v5" stroke="#2a3a9a"/></svg>
<div class="ab" style="left:46px;top:788px;width:6px;height:1px;background:repeating-linear-gradient(90deg,#a0a0a0 0 1px,transparent 1px 2px)"></div>
<svg style="left:53px;top:780px" width="14" height="14" viewBox="0 0 14 14"><rect x="0.5" y="0.5" width="13" height="13" rx="2.5" fill="url(#fg)" stroke="#c4a040"/><path d="M9.6 2.6c-1.2-.5-2.2.2-2.5 1.6l-1.4 6.4c-.3 1.4-1.2 1.9-2.3 1.5M5 5.6h4" stroke="#8a6e1a" stroke-width="1.25" fill="none"/><path d="M11.5 8.5l3 3-3 3-3-3z" fill="#f6d860" stroke="#b89028" stroke-width="0.9"/></svg>
<div class="t" style="left:75.40px;top:780.84px;font-size:12px;letter-spacing:0.244px;">Examples</div>
<svg style="left:36px;top:804px" width="9" height="9" viewBox="0 0 9 9"><rect x="0.5" y="0.5" width="8" height="8" fill="#fff" stroke="#909090"/><path d="M2 4.5h5" stroke="#2a3a9a"/></svg>
<div class="ab" style="left:46px;top:808px;width:6px;height:1px;background:repeating-linear-gradient(90deg,#a0a0a0 0 1px,transparent 1px 2px)"></div>
<svg style="left:53px;top:800px" width="14" height="14" viewBox="0 0 14 14"><rect x="0.5" y="0.5" width="13" height="13" rx="2.5" fill="url(#fg)" stroke="#c4a040"/><path d="M9.6 2.6c-1.2-.5-2.2.2-2.5 1.6l-1.4 6.4c-.3 1.4-1.2 1.9-2.3 1.5M5 5.6h4" stroke="#8a6e1a" stroke-width="1.25" fill="none"/><path d="M11.5 8.5l3 3-3 3-3-3z" fill="#f6d860" stroke="#b89028" stroke-width="0.9"/></svg>
<div class="t" style="left:75.40px;top:800.84px;font-size:12px;letter-spacing:-0.089px;">TRADING&nbsp;CENTRAL</div>
<div class="ab" style="left:61px;top:821px;width:1px;height:87px;background:repeating-linear-gradient(180deg,#a0a0a0 0 1px,transparent 1px 2px)"></div>
<div class="ab" style="left:62px;top:828px;width:10px;height:1px;background:repeating-linear-gradient(90deg,#a0a0a0 0 1px,transparent 1px 2px)"></div>
<svg style="left:74px;top:820px" width="14" height="14" viewBox="0 0 14 14"><rect x="0.5" y="0.5" width="13" height="13" rx="2.5" fill="url(#fg)" stroke="#c4a040"/><path d="M9.6 2.6c-1.2-.5-2.2.2-2.5 1.6l-1.4 6.4c-.3 1.4-1.2 1.9-2.3 1.5M5 5.6h4" stroke="#8a6e1a" stroke-width="1.25" fill="none"/><path d="M12 9l3 3-3 3-3-3z" fill="#a8a8a8" stroke="#686868" stroke-width="0.9"/></svg>
<div class="t" style="left:96.70px;top:820.84px;font-size:12px;letter-spacing:0.138px;">.Analyst&nbsp;Views</div>
<div class="ab" style="left:62px;top:848px;width:10px;height:1px;background:repeating-linear-gradient(90deg,#a0a0a0 0 1px,transparent 1px 2px)"></div>
<svg style="left:74px;top:840px" width="14" height="14" viewBox="0 0 14 14"><rect x="0.5" y="0.5" width="13" height="13" rx="2.5" fill="url(#fg)" stroke="#c4a040"/><path d="M9.6 2.6c-1.2-.5-2.2.2-2.5 1.6l-1.4 6.4c-.3 1.4-1.2 1.9-2.3 1.5M5 5.6h4" stroke="#8a6e1a" stroke-width="1.25" fill="none"/><path d="M12 9l3 3-3 3-3-3z" fill="#a8a8a8" stroke="#686868" stroke-width="0.9"/></svg>
<div class="t" style="left:96.70px;top:840.84px;font-size:12px;letter-spacing:0.387px;">Adaptive&nbsp;Candlesticks</div>
<div class="ab" style="left:62px;top:868px;width:10px;height:1px;background:repeating-linear-gradient(90deg,#a0a0a0 0 1px,transparent 1px 2px)"></div>
<svg style="left:74px;top:860px" width="14" height="14" viewBox="0 0 14 14"><rect x="0.5" y="0.5" width="13" height="13" rx="2.5" fill="url(#fg)" stroke="#c4a040"/><path d="M9.6 2.6c-1.2-.5-2.2.2-2.5 1.6l-1.4 6.4c-.3 1.4-1.2 1.9-2.3 1.5M5 5.6h4" stroke="#8a6e1a" stroke-width="1.25" fill="none"/><path d="M12 9l3 3-3 3-3-3z" fill="#a8a8a8" stroke="#686868" stroke-width="0.9"/></svg>
<div class="t" style="left:96.70px;top:860.84px;font-size:12px;letter-spacing:0.439px;">Adaptive&nbsp;Divergence&nbsp;Convergence&nbsp;ChartPriceMarks</div>
<div class="ab" style="left:62px;top:888px;width:10px;height:1px;background:repeating-linear-gradient(90deg,#a0a0a0 0 1px,transparent 1px 2px)"></div>
<svg style="left:74px;top:880px" width="14" height="14" viewBox="0 0 14 14"><rect x="0.5" y="0.5" width="13" height="13" rx="2.5" fill="url(#fg)" stroke="#c4a040"/><path d="M9.6 2.6c-1.2-.5-2.2.2-2.5 1.6l-1.4 6.4c-.3 1.4-1.2 1.9-2.3 1.5M5 5.6h4" stroke="#8a6e1a" stroke-width="1.25" fill="none"/><path d="M12 9l3 3-3 3-3-3z" fill="#a8a8a8" stroke="#686868" stroke-width="0.9"/></svg>
<div class="t" style="left:96.70px;top:880.84px;font-size:12px;letter-spacing:0.393px;">Adaptive&nbsp;Divergence&nbsp;Convergence&nbsp;Lines</div>
<div class="ab" style="left:62px;top:908px;width:10px;height:1px;background:repeating-linear-gradient(90deg,#a0a0a0 0 1px,transparent 1px 2px)"></div>
<svg style="left:74px;top:900px" width="14" height="14" viewBox="0 0 14 14"><rect x="0.5" y="0.5" width="13" height="13" rx="2.5" fill="url(#fg)" stroke="#c4a040"/><path d="M9.6 2.6c-1.2-.5-2.2.2-2.5 1.6l-1.4 6.4c-.3 1.4-1.2 1.9-2.3 1.5M5 5.6h4" stroke="#8a6e1a" stroke-width="1.25" fill="none"/><path d="M12 9l3 3-3 3-3-3z" fill="#a8a8a8" stroke="#686868" stroke-width="0.9"/></svg>
<div class="t" style="left:96.70px;top:900.84px;font-size:12px;letter-spacing:0.446px;">Adaptive&nbsp;Divergence&nbsp;Convergence&nbsp;Oscillators</div>
<div class="ab" style="left:41px;top:928px;width:11px;height:1px;background:repeating-linear-gradient(90deg,#a0a0a0 0 1px,transparent 1px 2px)"></div>
<svg style="left:53px;top:920px" width="14" height="14" viewBox="0 0 14 14"><rect x="0.5" y="0.5" width="13" height="13" rx="2.5" fill="url(#fg)" stroke="#c4a040"/><path d="M9.6 2.6c-1.2-.5-2.2.2-2.5 1.6l-1.4 6.4c-.3 1.4-1.2 1.9-2.3 1.5M5 5.6h4" stroke="#8a6e1a" stroke-width="1.25" fill="none"/><path d="M11.5 8.5l3 3-3 3-3-3z" fill="#f6d860" stroke="#b89028" stroke-width="0.9"/></svg>
<div class="t" style="left:75.40px;top:920.84px;font-size:12px;letter-spacing:0.430px;">Accelerator</div>
<div class="ab" style="left:41px;top:948px;width:11px;height:1px;background:repeating-linear-gradient(90deg,#a0a0a0 0 1px,transparent 1px 2px)"></div>
<svg style="left:53px;top:940px" width="14" height="14" viewBox="0 0 14 14"><rect x="0.5" y="0.5" width="13" height="13" rx="2.5" fill="url(#fg)" stroke="#c4a040"/><path d="M9.6 2.6c-1.2-.5-2.2.2-2.5 1.6l-1.4 6.4c-.3 1.4-1.2 1.9-2.3 1.5M5 5.6h4" stroke="#8a6e1a" stroke-width="1.25" fill="none"/><path d="M11.5 8.5l3 3-3 3-3-3z" fill="#f6d860" stroke="#b89028" stroke-width="0.9"/></svg>
<div class="t" style="left:75.40px;top:940.84px;font-size:12px;letter-spacing:0.360px;">Accumulation</div>
<div class="ab" style="left:41px;top:968px;width:11px;height:1px;background:repeating-linear-gradient(90deg,#a0a0a0 0 1px,transparent 1px 2px)"></div>
<svg style="left:53px;top:960px" width="14" height="14" viewBox="0 0 14 14"><rect x="0.5" y="0.5" width="13" height="13" rx="2.5" fill="url(#fg)" stroke="#c4a040"/><path d="M9.6 2.6c-1.2-.5-2.2.2-2.5 1.6l-1.4 6.4c-.3 1.4-1.2 1.9-2.3 1.5M5 5.6h4" stroke="#8a6e1a" stroke-width="1.25" fill="none"/><path d="M11.5 8.5l3 3-3 3-3-3z" fill="#f6d860" stroke="#b89028" stroke-width="0.9"/></svg>
<div class="t" style="left:75.40px;top:960.84px;font-size:12px;letter-spacing:0.905px;">Alligator</div>
<div class="ab" style="left:48px;top:794px;width:150px;height:27px;border:3.5px solid #f00;border-radius:3px"></div>
<div class="ab" style="left:6px;top:963px;width:499px;height:25px;background:#f0f0f0"></div>
<div class="ab" style="left:8px;top:963px;width:497px;height:1px;background:#000"></div>
<div class="ab" style="left:8px;top:964px;width:73px;height:20px;background:#fff"></div>
<div class="ab" style="left:8px;top:964px;width:1px;height:20px;background:#000"></div>
<div class="ab" style="left:80px;top:963px;width:1px;height:21px;background:#000"></div>
<div class="ab" style="left:8px;top:984px;width:73px;height:1px;background:#000"></div>
<div class="t" style="left:18.00px;top:966.84px;font-size:12px;letter-spacing:0.863px;">Common</div>
<div class="t" style="left:91.00px;top:966.84px;font-size:12px;letter-spacing:0.269px;color:#a09c9c">Favorites</div>
<div class="ab" style="left:153px;top:968px;width:1px;height:15px;background:#555"></div>
<div class="ab" style="left:513px;top:82px;width:176px;height:13px;background:linear-gradient(90deg,#c3d1df,#d3e0ec)"></div>
<div class="t" style="left:515.30px;top:80.84px;font-size:12px;letter-spacing:-0.800px;">Data&nbsp;Window</div>
<svg style="left:693.4px;top:85px" width="7" height="7" viewBox="0 0 7 7"><path d="M0.7 0.7L6.3 6.3M6.3 0.7L0.7 6.3" stroke="#000" stroke-width="1.5"/></svg>
<div class="ab" style="left:513px;top:96px;width:190px;height:1px;background:#a0a0a0"></div>
<div class="ab" style="left:513px;top:96px;width:1px;height:892px;background:#a0a0a0"></div>
<div class="ab" style="left:514px;top:97px;width:189px;height:891px;background:#fff"></div>
<div class="ab" style="left:703px;top:80px;width:3px;height:908px;background:#f0f0f0"></div>
<div class="ab" style="left:514px;top:97px;width:188px;height:20px;background:#ebebeb"></div>
<svg style="left:516px;top:100px" width="17" height="14" viewBox="0 0 17 14"><rect x="0.75" y="0.75" width="15" height="12.5" rx="1.5" fill="#fff" stroke="#1f5fd8" stroke-width="1.5"/><rect x="0.75" y="0.75" width="15" height="2.5" fill="#1f5fd8"/><path d="M9 2h1M11 2h1M13 2h1" stroke="#fff"/><path d="M2.8 11.5C4 7 5 5 6.5 7.5S8.5 11 9.5 9 11.5 5 13 5" stroke="#7aa0e8" fill="none" stroke-width="1.3"/></svg>
<div class="t" style="left:534.10px;top:100.84px;font-size:12px;letter-spacing:-0.162px;">XAUUSD.s,H1</div>
<div class="ab" style="left:514px;top:117px;width:188px;height:1px;background:#c8c8c8"></div>
<div class="ab" style="left:514px;top:118px;width:188px;height:20px;background:#fff"></div>
<div class="ab" style="left:613px;top:118px;width:1px;height:20px;background:#c8c8c8"></div>
<div class="ab" style="left:514px;top:138px;width:188px;height:1px;background:#c8c8c8"></div>
<div class="t" style="left:534.40px;top:121.84px;font-size:12px;letter-spacing:0.319px;">Date</div>
<div class="t" style="left:639.13px;top:121.84px;font-size:12px;">2022.11.22</div>
<div class="ab" style="left:514px;top:139px;width:188px;height:20px;background:#ebebeb"></div>
<div class="ab" style="left:613px;top:139px;width:1px;height:20px;background:#c8c8c8"></div>
<div class="ab" style="left:514px;top:159px;width:188px;height:1px;background:#c8c8c8"></div>
<div class="t" style="left:534.40px;top:142.84px;font-size:12px;letter-spacing:0.227px;">Time</div>
<div class="t" style="left:668.27px;top:142.84px;font-size:12px;">13:00</div>
<div class="ab" style="left:514px;top:160px;width:188px;height:20px;background:#fff"></div>
<div class="ab" style="left:613px;top:160px;width:1px;height:20px;background:#c8c8c8"></div>
<div class="ab" style="left:514px;top:180px;width:188px;height:1px;background:#c8c8c8"></div>
<div class="t" style="left:534.40px;top:163.84px;font-size:12px;letter-spacing:0.683px;">Open</div>
<div class="t" style="left:654.92px;top:163.84px;font-size:12px;">1746.01</div>
<div class="ab" style="left:514px;top:181px;width:188px;height:20px;background:#ebebeb"></div>
<div class="ab" style="left:613px;top:181px;width:1px;height:20px;background:#c8c8c8"></div>
<div class="ab" style="left:514px;top:201px;width:188px;height:1px;background:#c8c8c8"></div>
<div class="t" style="left:534.40px;top:184.84px;font-size:12px;letter-spacing:0.539px;">High</div>
<div class="t" style="left:654.92px;top:184.84px;font-size:12px;">1749.70</div>
<div class="ab" style="left:514px;top:202px;width:188px;height:20px;background:#fff"></div>
<div class="ab" style="left:613px;top:202px;width:1px;height:20px;background:#c8c8c8"></div>
<div class="ab" style="left:514px;top:222px;width:188px;height:1px;background:#c8c8c8"></div>
<div class="t" style="left:534.40px;top:205.84px;font-size:12px;letter-spacing:0.428px;">Low</div>
<div class="t" style="left:654.92px;top:205.84px;font-size:12px;">1745.72</div>
<div class="ab" style="left:514px;top:223px;width:188px;height:20px;background:#ebebeb"></div>
<div class="ab" style="left:613px;top:223px;width:1px;height:20px;background:#c8c8c8"></div>
<div class="ab" style="left:514px;top:243px;width:188px;height:1px;background:#c8c8c8"></div>
<div class="t" style="left:534.40px;top:226.84px;font-size:12px;letter-spacing:0.179px;">Close</div>
<div class="t" style="left:654.92px;top:226.84px;font-size:12px;">1748.51</div>
<div class="ab" style="left:514px;top:244px;width:188px;height:20px;background:#fff"></div>
<div class="ab" style="left:613px;top:244px;width:1px;height:20px;background:#c8c8c8"></div>
<div class="ab" style="left:514px;top:264px;width:188px;height:1px;background:#c8c8c8"></div>
<div class="t" style="left:534.40px;top:247.84px;font-size:12px;letter-spacing:0.656px;">Volume</div>
<div class="t" style="left:671.60px;top:247.84px;font-size:12px;">6232</div>
<div class="ab" style="left:706px;top:79px;width:676px;height:2px;background:#a0a0a0"></div>
<div class="ab" style="left:706px;top:80px;width:1px;height:892px;background:#a0a0a0"></div>
<div class="ab" style="left:707px;top:80px;width:1px;height:892px;background:#696969"></div>
<svg style="left:708px;top:81px" width="674" height="889" viewBox="0 0 674 889"><rect x="0" y="0" width="674" height="889" fill="#000"/><path d="M4 6.5H674 M4 39.5H674 M4 72.5H674 M4 105.5H674 M4 138.5H674 M4 171.5H674 M4 204.5H674 M4 237.5H674 M4 270.5H674 M4 303.5H674 M4 336.5H674 M4 369.5H674 M4 402.5H674 M4 435.5H674 M4 468.5H674 M4 501.5H674 M4 534.5H674 M4 567.5H674 M4 600.5H674 M4 633.5H674 M4 666.5H674 M4 699.5H674 M4 732.5H674 M4 765.5H674 M4 798.5H674 M4 831.5H674 M4 864.5H674" stroke="#7d8ca0" stroke-dasharray="3 3" fill="none" shape-rendering="crispEdges"/><path d="M35.5 8V866 M67.5 8V866 M99.5 8V866 M131.5 8V866 M163.5 8V866 M195.5 8V866 M227.5 8V866 M259.5 8V866 M291.5 8V866 M323.5 8V866 M355.5 8V866 M387.5 8V866 M419.5 8V866 M451.5 8V866 M483.5 8V866 M515.5 8V866 M547.5 8V866 M579.5 8V866 M611.5 8V866 M643.5 8V866" stroke="#7d8ca0" stroke-dasharray="3 3" fill="none" shape-rendering="crispEdges"/><path d="M2.5 2V868.5H674 M2 2.5H674" stroke="#fff" fill="none" shape-rendering="crispEdges"/><path d="M3 284.5H674" stroke="#7d8ca0" fill="none" shape-rendering="crispEdges"/><path d="M3.5 868V872 M67.5 868V872 M131.5 868V872 M195.5 868V872 M259.5 868V872 M323.5 868V872 M387.5 868V872 M451.5 868V872 M515.5 868V872 M579.5 868V872 M643.5 868V872" stroke="#fff" fill="none" shape-rendering="crispEdges"/><path d="M3.5 431V456 M5.5 447V459 M7.5 459V473 M9.5 466V490 M11.5 447V489 M13.5 448V481 M15.5 448V467 M17.5 453V463 M19.5 437V464 M21.5 448V477 M23.5 354V467 M25.5 365V436 M27.5 396V443 M29.5 409V437 M31.5 406V428 M33.5 410V436 M35.5 338V442 M37.5 393V481 M39.5 432V480 M41.5 427V479 M43.5 442V482 M45.5 343V480 M47.5 395V445 M49.5 387V415 M51.5 391V407 M53.5 379V409 M55.5 378V410 M57.5 408V438 M59.5 411V435 M61.5 411V452 M63.5 444V464 M65.5 420V459 M67.5 423V453 M69.5 406V457 M71.5 394V421 M73.5 360V397 M75.5 350V380 M77.5 355V387 M79.5 361V398 M81.5 378V432 M83.5 387V442 M85.5 390V443 M87.5 388V436 M89.5 414V441 M91.5 422V460 M93.5 425V447 M95.5 419V442 M97.5 429V441 M99.5 429V442 M101.5 430V444 M103.5 429V473 M105.5 468V494 M107.5 484V520 M109.5 511V528 M111.5 512V532 M113.5 478V521 M115.5 474V503 M117.5 456V490 M119.5 478V518 M121.5 497V530 M123.5 499V532 M125.5 484V534 M127.5 494V573 M129.5 533V587 M131.5 521V559 M133.5 540V579 M135.5 534V562 M137.5 525V547 M139.5 529V546 M141.5 533V546 M143.5 534V542 M145.5 535V549 M147.5 515V542 M149.5 508V528 M151.5 509V524 M153.5 499V534 M155.5 503V529 M157.5 511V534 M159.5 508V523 M161.5 490V518 M163.5 498V532 M165.5 484V538 M167.5 500V522 M169.5 500V543 M171.5 523V551 M173.5 511V559 M175.5 534V622 M177.5 554V613 M179.5 559V598 M181.5 582V621 M183.5 599V629 M185.5 623V641 M187.5 622V640 M189.5 611V634 M191.5 600V618 M193.5 598V626 M195.5 618V664 M197.5 648V668 M199.5 645V666 M201.5 641V660 M203.5 643V664 M205.5 644V666 M207.5 645V682 M209.5 666V695 M211.5 676V722 M213.5 681V714 M215.5 685V701 M217.5 691V706 M219.5 645V699 M221.5 649V699 M223.5 682V731 M225.5 724V756 M227.5 719V754 M229.5 701V727 M231.5 703V734 M233.5 704V733 M235.5 703V714 M237.5 706V718 M239.5 686V714 M241.5 660V695 M243.5 669V685 M245.5 660V682 M247.5 654V670 M249.5 657V693 M251.5 675V695 M253.5 660V696 M255.5 662V668 M257.5 633V668 M259.5 633V654 M261.5 623V654 M263.5 633V654 M265.5 636V657 M267.5 647V686 M269.5 662V686 M271.5 681V701 M273.5 683V710 M275.5 696V717 M277.5 705V722 M279.5 692V717 M281.5 692V704 M283.5 688V701 M285.5 676V691 M287.5 681V707 M289.5 683V709 M291.5 684V725 M293.5 720V752 M295.5 723V749 M297.5 697V726 M299.5 654V704 M301.5 662V704 M303.5 697V733 M305.5 699V741 M307.5 699V710 M309.5 701V731 M311.5 699V846 M313.5 639V733 M315.5 667V699 M317.5 668V689 M319.5 663V688 M321.5 649V678 M323.5 594V673 M325.5 599V626 M327.5 612V618 M329.5 603V628 M331.5 602V612 M333.5 581V603 M335.5 574V599 M337.5 576V589 M339.5 568V581 M341.5 571V584 M343.5 576V599 M345.5 568V597 M347.5 561V602 M349.5 566V576 M351.5 557V571 M353.5 553V586 M355.5 555V568 M357.5 561V582 M359.5 564V580 M361.5 555V582 M363.5 564V575 M365.5 564V584 M367.5 577V583 M369.5 574V588 M371.5 577V603 M373.5 563V598 M375.5 548V572 M377.5 545V563 M379.5 535V558 M381.5 552V577 M383.5 567V587 M385.5 567V610 M387.5 590V621 M389.5 593V628 M391.5 587V620 M393.5 590V614 M395.5 605V621 M397.5 609V653 M399.5 600V644 M401.5 602V626 M403.5 607V624 M405.5 578V614 M407.5 573V600 M409.5 571V619 M411.5 590V612 M413.5 605V654 M415.5 614V651 M417.5 616V632 M419.5 608V631 M421.5 604V633 M423.5 596V627 M425.5 589V623 M427.5 544V623 M429.5 521V552 M431.5 515V540 M433.5 527V562 M435.5 550V590 M437.5 569V619 M439.5 594V659 M441.5 619V673 M443.5 645V683 M445.5 655V682 M447.5 675V695 M449.5 689V701 M451.5 683V700 M453.5 685V699 M455.5 682V700 M457.5 679V696 M459.5 648V696 M461.5 640V665 M463.5 616V663 M465.5 588V620 M467.5 582V607 M469.5 585V611 M471.5 585V607 M473.5 552V604 M475.5 561V592 M477.5 573V595 M479.5 563V598 M481.5 563V610 M483.5 563V623 M485.5 588V645 M487.5 560V611 M489.5 578V623 M491.5 604V624 M493.5 604V629 M495.5 602V625 M497.5 617V637 M499.5 621V633 M501.5 624V633 M503.5 612V638 M505.5 588V620 M507.5 590V607 M509.5 585V602 M511.5 578V591 M513.5 581V592 M515.5 569V599 M517.5 569V591 M519.5 569V583 M521.5 545V583 M523.5 527V557 M525.5 519V556 M527.5 525V550 M529.5 519V542 M531.5 507V588 M533.5 565V628 M535.5 586V617 M537.5 590V617 M539.5 535V660 M541.5 475V562 M543.5 466V495 M545.5 467V479 M547.5 433V460 M549.5 399V440 M551.5 389V425 M553.5 419V451 M555.5 412V441 M557.5 389V419 M559.5 368V395 M561.5 361V392 M563.5 362V431 M565.5 395V430 M567.5 399V418 M569.5 388V417 M571.5 378V416 M573.5 349V385 M575.5 294V354 M577.5 208V318 M579.5 201V281 M581.5 213V263 M583.5 214V243 M585.5 211V238 M587.5 209V233 M589.5 208V226 M591.5 208V216 M593.5 199V220 M595.5 214V238 M597.5 223V247 M599.5 232V256 M601.5 245V268 M603.5 241V262 M605.5 244V264 M607.5 231V257 M609.5 213V246 M611.5 212V239 M613.5 213V236 M615.5 220V239 M617.5 231V251 M619.5 238V257 M621.5 226V401 M623.5 335V375 M625.5 335V382 M627.5 262V354 M629.5 246V275 M631.5 259V275 M633.5 244V285 M635.5 238V269 M637.5 241V264 M639.5 239V277 M641.5 226V246 M643.5 170V236 M645.5 171V189 M647.5 163V188 M649.5 157V173 M651.5 160V184 M653.5 171V213 M655.5 205V254 M657.5 230V256 M659.5 243V272 M661.5 254V286 M663.5 262V282 M665.5 249V283 M667.5 246V304 M669.5 283V359 M671.5 359V443 M673.5 393V450" stroke="#00ff00" fill="none" shape-rendering="crispEdges"/></svg>
<div class="t" style="left:714.80px;top:85.03px;font-size:10px;transform:scaleX(0.9378);transform-origin:0 0;color:#fff">XAUUSD.s,H1&nbsp;&nbsp;1793.11&nbsp;1794.39&nbsp;1793.11&nbsp;1793.40</div>
<div class="t" style="left:710.60px;top:950.53px;font-size:10px;transform:scaleX(0.9328);transform-origin:0 0;color:#fff">14&nbsp;Nov&nbsp;2022</div>
<div class="t" style="left:774.60px;top:950.53px;font-size:10px;transform:scaleX(0.9328);transform-origin:0 0;color:#fff">16&nbsp;Nov&nbsp;08:00</div>
<div class="t" style="left:838.60px;top:950.53px;font-size:10px;transform:scaleX(0.9328);transform-origin:0 0;color:#fff">17&nbsp;Nov&nbsp;17:00</div>
<div class="t" style="left:902.60px;top:950.53px;font-size:10px;transform:scaleX(0.9328);transform-origin:0 0;color:#fff">21&nbsp;Nov&nbsp;03:00</div>
<div class="t" style="left:966.60px;top:950.53px;font-size:10px;transform:scaleX(0.9328);transform-origin:0 0;color:#fff">22&nbsp;Nov&nbsp;12:00</div>
<div class="t" style="left:1030.60px;top:950.53px;font-size:10px;transform:scaleX(0.9328);transform-origin:0 0;color:#fff">23&nbsp;Nov&nbsp;21:00</div>
<div class="t" style="left:1094.60px;top:950.53px;font-size:10px;transform:scaleX(0.9328);transform-origin:0 0;color:#fff">25&nbsp;Nov&nbsp;10:00</div>
<div class="t" style="left:1158.60px;top:950.53px;font-size:10px;transform:scaleX(0.9328);transform-origin:0 0;color:#fff">28&nbsp;Nov&nbsp;22:00</div>
<div class="t" style="left:1222.60px;top:950.53px;font-size:10px;transform:scaleX(0.9328);transform-origin:0 0;color:#fff">30&nbsp;Nov&nbsp;08:00</div>
<div class="t" style="left:1286.60px;top:950.53px;font-size:10px;transform:scaleX(0.9328);transform-origin:0 0;color:#fff">1&nbsp;Dec&nbsp;17:00</div>
<div class="t" style="left:1350.60px;top:950.53px;font-size:10px;transform:scaleX(0.9328);transform-origin:0 0;color:#fff">5&nbsp;Dec&nbsp;05:00</div>
<div class="ab" style="left:708px;top:969px;width:674px;height:2px;background:#fff"></div>
<div class="ab" style="left:708px;top:971px;width:216px;height:1px;background:#000"></div>
<div class="ab" style="left:1023px;top:971px;width:359px;height:1px;background:#000"></div>
<div class="ab" style="left:707px;top:969px;width:1px;height:19px;background:#696969"></div>
<div class="ab" style="left:925px;top:971px;width:98px;height:17px;background:#fff"></div>
<div class="ab" style="left:924px;top:971px;width:1px;height:17px;background:#000"></div>
<div class="ab" style="left:1023px;top:971px;width:1px;height:17px;background:#000"></div>
<div class="t" style="left:724.70px;top:974.84px;font-size:12px;letter-spacing:0.070px;color:#8c8c8c">XAUUSD.s,M30</div>
<div class="ab" style="left:824px;top:974px;width:1px;height:14px;background:#555"></div>
<div class="t" style="left:834.80px;top:974.84px;font-size:12px;letter-spacing:-0.082px;color:#8c8c8c">XAUUSD.s,H1</div>
<div class="t" style="left:935.50px;top:974.84px;font-size:12px;letter-spacing:-0.182px;">XAUUSD.s,H1</div>
</body></html>
